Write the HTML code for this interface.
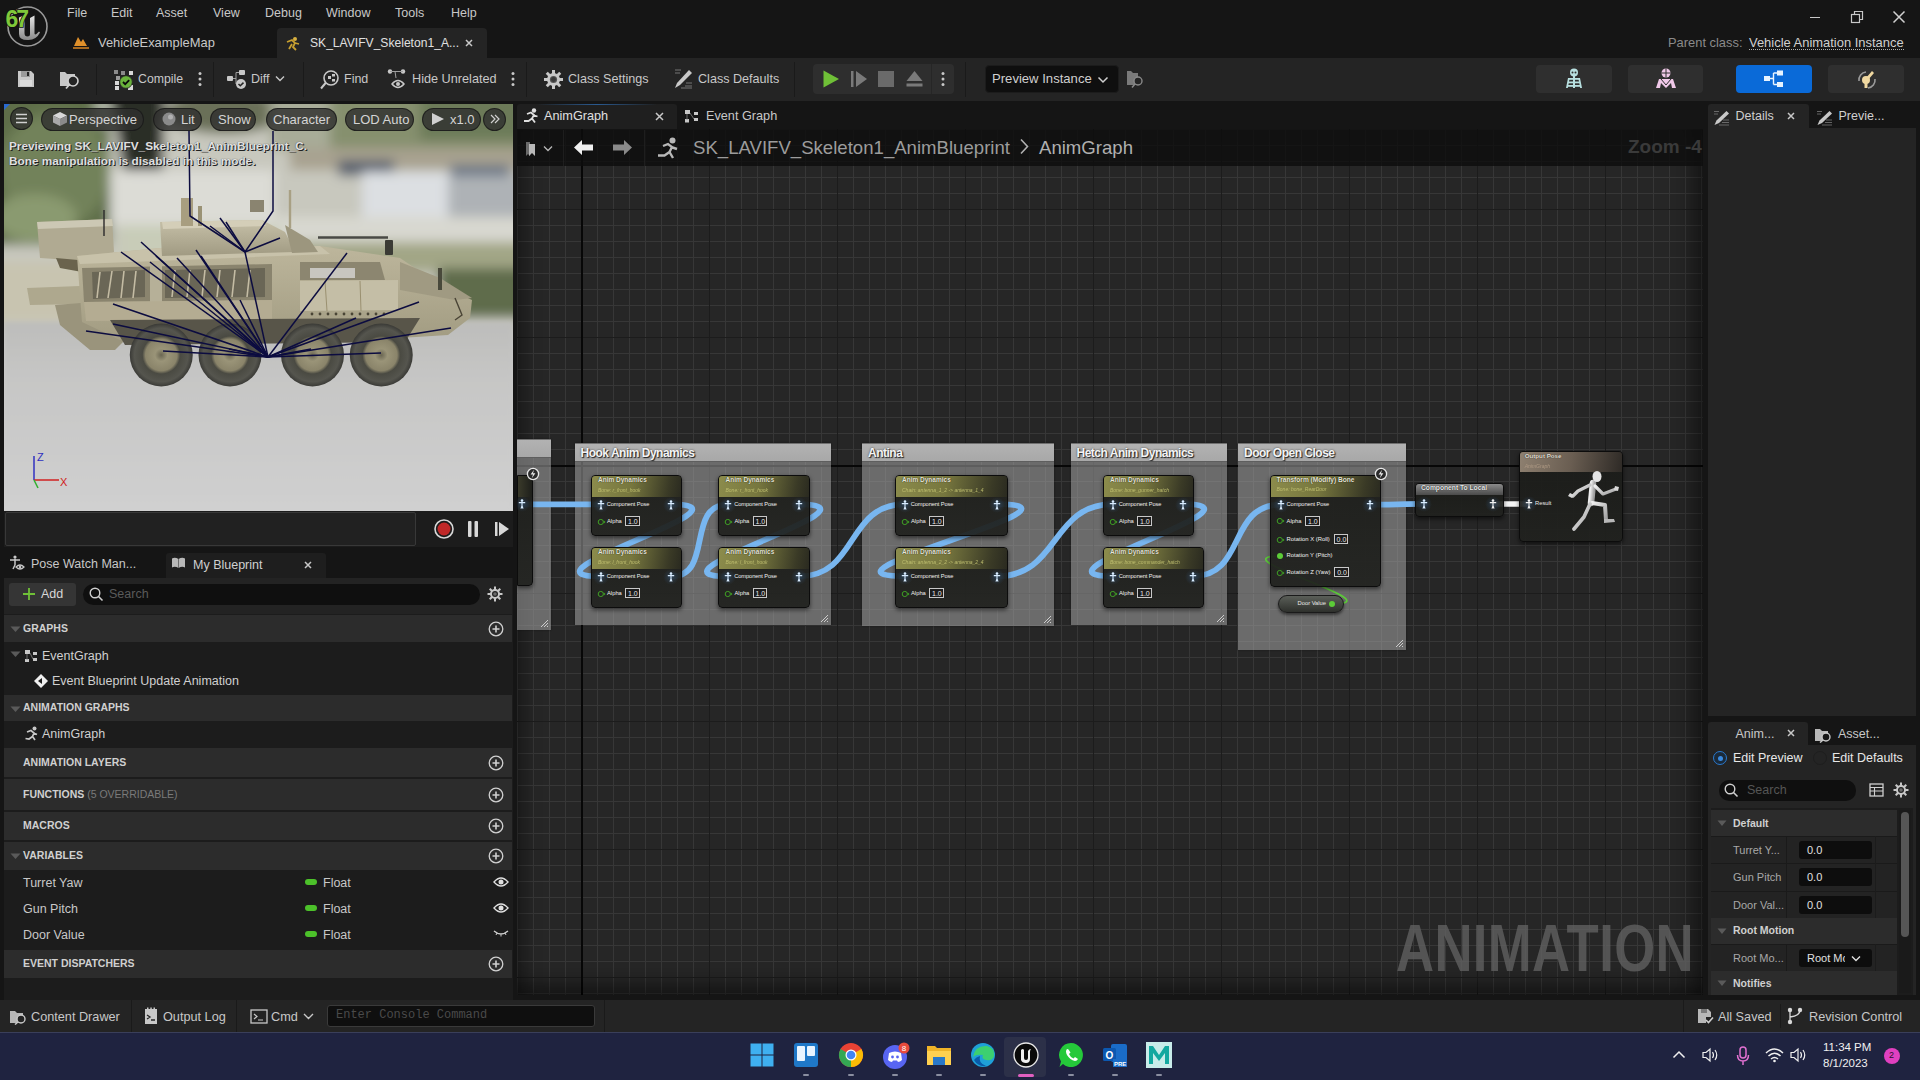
<!DOCTYPE html>
<html><head><meta charset="utf-8">
<style>
*{box-sizing:border-box;margin:0;padding:0}
html,body{width:1920px;height:1080px;overflow:hidden;background:#151515;font-family:"Liberation Sans",sans-serif;color:#c0c0c0}
.a{position:absolute}
.t{position:absolute;white-space:nowrap;line-height:1}
#title{left:0;top:0;width:1920px;height:58px;background:#151515}
#toolbar{left:0;top:58px;width:1920px;height:43px;background:#242424}
#viewport{left:4px;top:104px;width:509px;height:407px;background:#c8c8c8;overflow:hidden}
#timeline{left:4px;top:511px;width:509px;height:36px;background:#1c1c1c}
#ltabs{left:4px;top:547px;width:509px;height:31px;background:#151515}
#mybp{left:4px;top:578px;width:509px;height:422px;background:#1c1c1c}
#gtabs{left:517px;top:104px;width:1186px;height:25px;background:#151515}
#canvas{left:517px;top:129px;width:1186px;height:866px;background-color:#262626;
 background-image:linear-gradient(to right,#1c1c1c 1px,transparent 1px),linear-gradient(to bottom,#1c1c1c 1px,transparent 1px),linear-gradient(to right,#373737 1px,transparent 1px),linear-gradient(to bottom,#373737 1px,transparent 1px);
 background-size:128px 128px,128px 128px,16px 16px,16px 16px;
 background-position:64px 80px,64px 80px,0 0,0 0;overflow:hidden}
#details{left:1708px;top:104px;width:207px;height:612px;background:#242424}
#animprev{left:1708px;top:720px;width:207px;height:275px;background:#242424}
#status{left:0;top:1000px;width:1920px;height:32px;background:#242424}
#taskbar{left:0;top:1032px;width:1920px;height:48px;background:#1f2340}
.pill{background:rgba(48,48,46,0.82);border:1.5px solid rgba(20,20,20,0.7);border-radius:12px}
.vptxt{font-weight:700;color:#e0e0e0;text-shadow:1px 1px 0 #202020,0 0 1px #303030}
.cmt{position:absolute;background:rgba(166,166,166,0.54);box-shadow:0 0 2px rgba(0,0,0,0.4)}
.cmth{position:absolute;left:0;top:0;width:100%;background:linear-gradient(to bottom,#b2b2b2,#a8a8a8);border-top:1.5px solid #707070;border-bottom:1px solid #5e5e5e}
.cmtt{font-size:12px;font-weight:700;color:#f4f4f4;letter-spacing:-0.5px;text-shadow:1px 1px 1px #202020,0 0 2px #404040}
.node{position:absolute;background:linear-gradient(to bottom,rgba(26,27,24,0.93),rgba(32,33,30,0.93));border:1px solid #0c0c0c;border-radius:4px;box-shadow:0 2px 4px rgba(0,0,0,0.55);overflow:hidden}
.nh{position:absolute;left:0;top:0;width:100%;background:linear-gradient(100deg,#8c8c4c 0%,#76763e 45%,#3a3a26 85%,#2a2a20 100%)}
.vbox{position:absolute;border:1px solid #c8c8c8;background:#1c1c1c}
.vbox span{position:absolute;left:2px;top:0.5px;font-size:7px;line-height:1;color:#e8e8e8;white-space:nowrap}
</style></head><body>
<div id="title" class="a">
 <svg class="a" style="left:4px;top:4px" width="46" height="46" viewBox="0 0 46 46">
  <defs><linearGradient id="ug" x1="0" y1="0" x2="0" y2="1"><stop offset="0" stop-color="#e8e8e8"/><stop offset="1" stop-color="#8a8a8a"/></linearGradient></defs>
  <circle cx="23.5" cy="22.5" r="19.5" fill="#151515" stroke="#9a9a9a" stroke-width="1.6"/>
  <path d="M15 13.5 L20.5 11 L20.5 29 Q20.5 32.5 23.5 32.5 Q26 32.5 26 30 L26 14 L30.5 11.5 L30.5 29.5 Q31 32 35 27.5 L36 28.5 Q32 36.5 23.5 36 Q15 36 15 30 Z" fill="url(#ug)"/>
  <text x="1.5" y="23" font-family="Liberation Sans" font-weight="700" font-size="23" fill="#80c83a" stroke="#101010" stroke-width="1.6" paint-order="stroke" letter-spacing="-2">67</text>
 </svg>
 <div class="t" style="left:67px;top:6.5px;font-size:12.5px;color:#c8c8c8">File</div>
 <div class="t" style="left:111px;top:6.5px;font-size:12.5px;color:#c8c8c8">Edit</div>
 <div class="t" style="left:156px;top:6.5px;font-size:12.5px;color:#c8c8c8">Asset</div>
 <div class="t" style="left:213px;top:6.5px;font-size:12.5px;color:#c8c8c8">View</div>
 <div class="t" style="left:265px;top:6.5px;font-size:12.5px;color:#c8c8c8">Debug</div>
 <div class="t" style="left:326px;top:6.5px;font-size:12.5px;color:#c8c8c8">Window</div>
 <div class="t" style="left:395px;top:6.5px;font-size:12.5px;color:#c8c8c8">Tools</div>
 <div class="t" style="left:451px;top:6.5px;font-size:12.5px;color:#c8c8c8">Help</div>
 <svg class="a" style="left:72px;top:34px" width="18" height="16" viewBox="0 0 18 16"><path d="M2 12 L6 3 L9 8 L11 5 L15 12 Z" fill="#e0902a"/><rect x="1" y="13" width="16" height="2" fill="#a86a20"/></svg>
 <div class="t" style="left:98px;top:37px;font-size:12.9px;color:#c8c8c8">VehicleExampleMap</div>
 <div class="a" style="left:277px;top:28px;width:210px;height:30px;background:#242424;border-radius:4px 4px 0 0"></div>
 <svg class="a" style="left:284px;top:35px" width="18" height="16" viewBox="0 0 18 16"><circle cx="11" cy="4" r="2" fill="#d8b040"/><path d="M3 7 l5-2 l3 3 l-2 4 l3 3 M8 9 l-3 5 M11 8 l4 1" stroke="#c8a030" stroke-width="1.8" fill="none"/></svg>
 <div class="t" style="left:310px;top:37px;font-size:12.1px;color:#e0e0e0">SK_LAVIFV_Skeleton1_A...</div>
 <svg class="a" style="left:465px;top:39px" width="8" height="8" viewBox="0 0 8 8"><path d="M1 1 L7 7 M7 1 L1 7" stroke="#c8c8c8" stroke-width="1.5"/></svg>
 <div class="t" style="left:1668px;top:37px;font-size:12.9px;color:#8a8a8a">Parent class:</div>
 <div class="t" style="left:1749px;top:37px;font-size:12.95px;color:#d0d0d0">Vehicle Animation Instance</div>
 <div class="a" style="left:1749px;top:49px;width:155px;height:0;border-top:1px dotted #b0b0b0"></div>
 <div class="a" style="left:1810px;top:17px;width:10px;height:1px;background:#c8c8c8"></div>
 <svg class="a" style="left:1850px;top:10px" width="14" height="14" viewBox="0 0 14 14"><rect x="1.5" y="4.5" width="8" height="8" fill="none" stroke="#c8c8c8" stroke-width="1.2"/><path d="M4.5 4.5 V1.5 H12.5 V9.5 H9.5" fill="none" stroke="#c8c8c8" stroke-width="1.2"/></svg>
 <svg class="a" style="left:1892px;top:10px" width="14" height="14" viewBox="0 0 14 14"><path d="M1.5 1.5 L12.5 12.5 M12.5 1.5 L1.5 12.5" stroke="#d0d0d0" stroke-width="1.5"/></svg>
</div>
<div id="toolbar" class="a">
 <svg class="a" style="left:16px;top:11px" width="20" height="20" viewBox="0 0 20 20"><path d="M2 2 H15 L18 5 V18 H2 Z" fill="#c8c8c8"/><rect x="5" y="2" width="9" height="6" fill="#9a9a9a"/><rect x="11" y="3" width="2" height="4" fill="#242424"/><rect x="4" y="11" width="12" height="6" fill="#dcdcdc"/></svg>
 <svg class="a" style="left:59px;top:11px" width="22" height="22" viewBox="0 0 22 22"><path d="M1 3 h5 l2 2 h8 v12 h-15 z" fill="#c8c8c8"/><circle cx="14" cy="12" r="5" fill="#242424" stroke="#d0d0d0" stroke-width="1.6"/><path d="M10.5 15.5 L7 19.5" stroke="#d0d0d0" stroke-width="1.8"/></svg>
 <div class="a" style="left:96px;top:6px;width:1px;height:31px;background:#1a1a1a"></div>
 <svg class="a" style="left:113px;top:11px" width="22" height="22" viewBox="0 0 22 22"><rect x="1" y="1" width="4" height="4" fill="#8a8a8a"/><rect x="8" y="2" width="4" height="4" fill="#8a8a8a"/><rect x="16" y="2" width="4" height="4" fill="#d8d8d8"/><rect x="3" y="7" width="4" height="4" fill="#9a9a9a"/><rect x="2" y="12" width="4" height="4" fill="#d8d8d8"/><rect x="2" y="17" width="4" height="4" fill="#d8d8d8"/><rect x="15" y="16" width="5" height="5" fill="#d8d8d8"/><circle cx="13" cy="13" r="6.3" fill="#6ab43c" stroke="#242424" stroke-width="0.8"/><path d="M10 13 l2.2 2.2 l4-4" stroke="#0a0a0a" stroke-width="1.8" fill="none"/></svg>
 <div class="t" style="left:138px;top:15px;font-size:12.3px;color:#c8c8c8">Compile</div>
 <svg class="a" style="left:198px;top:13px" width="4" height="16" viewBox="0 0 4 16"><circle cx="2" cy="2.5" r="1.5" fill="#c8c8c8"/><circle cx="2" cy="8" r="1.5" fill="#c8c8c8"/><circle cx="2" cy="13.5" r="1.5" fill="#c8c8c8"/></svg>
 <div class="a" style="left:213px;top:4px;width:1px;height:35px;background:#1a1a1a"></div>
 <svg class="a" style="left:226px;top:11px" width="22" height="22" viewBox="0 0 22 22"><rect x="1" y="7" width="6" height="5" rx="1" fill="#c8c8c8"/><rect x="13" y="1" width="6" height="5" rx="1" fill="#c8c8c8"/><path d="M7 9.5 H10 M10 3.5 V15 M10 3.5 H13" stroke="#a0a0a0" stroke-width="1"/><circle cx="15" cy="15" r="5" fill="#c8c8c8"/><path d="M12.5 15 l1.8 1.8 l3.2-3.2" stroke="#242424" stroke-width="1.5" fill="none"/></svg>
 <div class="t" style="left:251px;top:15px;font-size:12.5px;color:#c8c8c8">Diff</div>
 <svg class="a" style="left:275px;top:17px" width="10" height="7" viewBox="0 0 10 7"><path d="M1 1.5 L5 5.5 L9 1.5" stroke="#c8c8c8" stroke-width="1.4" fill="none"/></svg>
 <div class="a" style="left:303px;top:4px;width:1px;height:35px;background:#1a1a1a"></div>
 <svg class="a" style="left:319px;top:11px" width="22" height="22" viewBox="0 0 22 22"><circle cx="12" cy="9" r="7" fill="none" stroke="#c8c8c8" stroke-width="1.6"/><path d="M7 13.5 L2 19.5" stroke="#c8c8c8" stroke-width="2"/><rect x="9" y="7" width="3" height="3" fill="#c8c8c8"/><rect x="13" y="5" width="3" height="2.5" fill="#c8c8c8"/><rect x="13" y="10" width="3" height="2.5" fill="#c8c8c8"/></svg>
 <div class="t" style="left:344px;top:15px;font-size:12.5px;color:#c8c8c8">Find</div>
 <svg class="a" style="left:387px;top:10px" width="22" height="22" viewBox="0 0 22 22"><circle cx="3" cy="3.5" r="2.2" fill="#c8c8c8"/><circle cx="16" cy="3.5" r="2.2" fill="#c8c8c8"/><path d="M3 3.5 H16 M8 3.5 L9 10" stroke="#a0a0a0" stroke-width="1"/><path d="M5 16 q6-7 12 0 q-6 7-12 0 z" fill="none" stroke="#c8c8c8" stroke-width="1.5"/><circle cx="11" cy="16" r="2" fill="#c8c8c8"/></svg>
 <div class="t" style="left:412px;top:15px;font-size:12.7px;color:#c8c8c8">Hide Unrelated</div>
 <svg class="a" style="left:511px;top:13px" width="4" height="16" viewBox="0 0 4 16"><circle cx="2" cy="2.5" r="1.5" fill="#c8c8c8"/><circle cx="2" cy="8" r="1.5" fill="#c8c8c8"/><circle cx="2" cy="13.5" r="1.5" fill="#c8c8c8"/></svg>
 <div class="a" style="left:526px;top:4px;width:1px;height:35px;background:#1a1a1a"></div>
 <svg class="a" style="left:543px;top:11px" width="21" height="21" viewBox="0 0 21 21"><g fill="#c8c8c8"><circle cx="10.5" cy="10.5" r="6.5"/><rect x="9" y="1" width="3" height="19"/><rect x="1" y="9" width="19" height="3"/><rect x="9" y="1" width="3" height="19" transform="rotate(45 10.5 10.5)"/><rect x="9" y="1" width="3" height="19" transform="rotate(-45 10.5 10.5)"/></g><circle cx="10.5" cy="10.5" r="3.6" fill="#555"/><circle cx="10.5" cy="10.5" r="2.4" fill="#3a3a3a"/></svg>
 <div class="t" style="left:568px;top:15px;font-size:12.6px;color:#c8c8c8">Class Settings</div>
 <svg class="a" style="left:673px;top:10px" width="22" height="22" viewBox="0 0 22 22"><path d="M2 2 H8 M2 5 H7 M13 15 H19 M12 18 H19 M8 20 H19" stroke="#8a8a8a" stroke-width="0.8"/><path d="M16 2 L19 5 L7 17 L2 20 L4 15 Z" fill="#c8c8c8"/></svg>
 <div class="t" style="left:698px;top:15px;font-size:12.6px;color:#c8c8c8">Class Defaults</div>
 <div class="a" style="left:794px;top:4px;width:1px;height:35px;background:#1a1a1a"></div>
 <div class="a" style="left:813px;top:6px;width:141px;height:30px;background:#2e2e2e;border-radius:4px"></div>
 <div class="a" style="left:931px;top:6px;width:1px;height:30px;background:#262626"></div>
 <svg class="a" style="left:821px;top:11px" width="20" height="20" viewBox="0 0 20 20"><path d="M2.5 1.5 L18 10 L2.5 18.5 Z" fill="#6fc037"/></svg>
 <svg class="a" style="left:850px;top:12px" width="18" height="18" viewBox="0 0 18 18"><rect x="1" y="1" width="2.5" height="16" fill="#7a7a7a"/><path d="M6 1 L17 9 L6 17 Z" fill="#7a7a7a"/></svg>
 <svg class="a" style="left:877px;top:12px" width="18" height="18" viewBox="0 0 18 18"><rect x="1" y="1" width="16" height="16" fill="#6a6a6a"/></svg>
 <svg class="a" style="left:905px;top:11px" width="19" height="19" viewBox="0 0 19 19"><path d="M9.5 2 L17.5 12 H1.5 Z" fill="#7a7a7a"/><rect x="1.5" y="14.5" width="16" height="3" fill="#7a7a7a"/></svg>
 <svg class="a" style="left:941px;top:13px" width="4" height="16" viewBox="0 0 4 16"><circle cx="2" cy="2.5" r="1.5" fill="#c8c8c8"/><circle cx="2" cy="8" r="1.5" fill="#c8c8c8"/><circle cx="2" cy="13.5" r="1.5" fill="#c8c8c8"/></svg>
 <div class="a" style="left:965px;top:4px;width:1px;height:35px;background:#1a1a1a"></div>
 <div class="a" style="left:985px;top:7px;width:134px;height:28px;background:#0f0f0f;border-radius:4px;border:1px solid #1c1c1c"></div>
 <div class="t" style="left:992px;top:14px;font-size:13.1px;color:#d0d0d0">Preview Instance</div>
 <svg class="a" style="left:1097px;top:18px" width="12" height="8" viewBox="0 0 12 8"><path d="M1.5 1.5 L6 6 L10.5 1.5" stroke="#d0d0d0" stroke-width="1.5" fill="none"/></svg>
 <svg class="a" style="left:1125px;top:10px" width="20" height="22" viewBox="0 0 20 22"><path d="M2 3 h4 l2 2 h5 v12 h-11 z" fill="#7a7a7a"/><circle cx="13" cy="13" r="4" fill="#242424" stroke="#8a8a8a" stroke-width="1.4"/><path d="M10 16 L7 19.5" stroke="#8a8a8a" stroke-width="1.5"/></svg>
 <div class="a" style="left:1536px;top:7px;width:76px;height:28px;background:#2f2f2f;border-radius:4px"></div>
 <div class="a" style="left:1628px;top:7px;width:75px;height:28px;background:#2f2f2f;border-radius:4px"></div>
 <div class="a" style="left:1736px;top:7px;width:76px;height:28px;background:#0a6ad8;border-radius:4px"></div>
 <div class="a" style="left:1828px;top:7px;width:76px;height:28px;background:#2f2f2f;border-radius:4px"></div>
 <svg class="a" style="left:1564px;top:10px" width="20" height="22" viewBox="0 0 20 22"><g fill="#b8e0e0"><circle cx="10" cy="4.5" r="4"/><rect x="9" y="8" width="2" height="12"/><rect x="4" y="10" width="12" height="1.8"/><rect x="4" y="13.5" width="12" height="1.8"/><rect x="4" y="17" width="12" height="1.8"/><path d="M4 10 L2 20 h1.8 L5.5 11 z M16 10 L18 20 h-1.8 L14.5 11 z"/></g><circle cx="8.5" cy="4.5" r="1" fill="#2f2f2f"/><circle cx="11.5" cy="4.5" r="1" fill="#2f2f2f"/></svg>
 <svg class="a" style="left:1655px;top:10px" width="22" height="22" viewBox="0 0 22 22"><g fill="#f0c8e8"><circle cx="11" cy="5" r="4.5"/><path d="M4 11 h14 l3 9 h-4 l-1-5 l-5 5 l-5-5 l-1 5 h-4 z"/></g><path d="M11 0.5 V9.5 M6.5 5 H15.5" stroke="#2f2f2f" stroke-width="1"/><path d="M6 11 L11 17 L16 11" stroke="#2f2f2f" stroke-width="1" fill="none"/></svg>
 <svg class="a" style="left:1763px;top:11px" width="22" height="20" viewBox="0 0 22 20"><rect x="1" y="7" width="6" height="5" fill="#e8f4ff"/><rect x="14" y="1.5" width="6" height="5" fill="#e8f4ff"/><rect x="14" y="13" width="6" height="5" fill="#e8f4ff"/><path d="M7 9.5 H10.5 M10.5 4 V15.5 M10.5 4 H14 M10.5 15.5 H14" stroke="#e8f4ff" stroke-width="1.4" fill="none"/></svg>
 <svg class="a" style="left:1856px;top:10px" width="22" height="22" viewBox="0 0 22 22"><path d="M3 13 A8 8 0 0 1 10 4" stroke="#9a9a9a" stroke-width="1.6" fill="none"/><path d="M12 20 A8 8 0 0 0 19 11" stroke="#9a9a9a" stroke-width="1.6" fill="none"/><path d="M16 3 L18 5 L12 12 L10 10 Z" fill="#f0d8a0"/><circle cx="10" cy="12" r="4" fill="#f0d8a0"/><rect x="8.5" y="15" width="3" height="5" fill="#f0d8a0"/></svg>
</div>
<div id="viewport" class="a">
 <svg class="a" style="left:0;top:0" width="509" height="407" viewBox="4 104 509 407">
  <defs>
   <filter id="bl" x="-20%" y="-20%" width="140%" height="140%"><feGaussianBlur stdDeviation="6"/></filter>
   <filter id="bl2" x="-20%" y="-20%" width="140%" height="140%"><feGaussianBlur stdDeviation="2.5"/></filter>
   <filter id="bl1"><feGaussianBlur stdDeviation="0.6"/></filter>
   <linearGradient id="floor" x1="0" y1="0" x2="0" y2="1"><stop offset="0" stop-color="#bdbdbb"/><stop offset="0.3" stop-color="#c6c6c5"/><stop offset="1" stop-color="#d0d0d0"/></linearGradient>
   <linearGradient id="hull" x1="0" y1="0" x2="0" y2="1"><stop offset="0" stop-color="#bdb69c"/><stop offset="1" stop-color="#a29c82"/></linearGradient>
   <linearGradient id="turret" x1="0" y1="0" x2="0" y2="1"><stop offset="0" stop-color="#c6c0a8"/><stop offset="1" stop-color="#a09a82"/></linearGradient>
   <radialGradient id="wheel" cx="0.5" cy="0.5" r="0.5"><stop offset="0" stop-color="#6a6652"/><stop offset="0.2" stop-color="#9a9478"/><stop offset="0.5" stop-color="#8a846a"/><stop offset="0.6" stop-color="#4a4a42"/><stop offset="0.85" stop-color="#55554e"/><stop offset="1" stop-color="#3a3a36"/></radialGradient>
  </defs>
  <rect x="4" y="104" width="509" height="407" fill="url(#floor)"/>
  <g filter="url(#bl)">
   <rect x="-20" y="80" width="560" height="250" fill="#c8c8be"/>
   <rect x="-20" y="80" width="130" height="165" fill="#5e6e4a"/>
   <ellipse cx="55" cy="170" rx="55" ry="58" fill="#72825a"/>
   <ellipse cx="35" cy="218" rx="42" ry="24" fill="#8a9a70"/>
   <rect x="95" y="80" width="40" height="45" fill="#aab0a0"/>
   <path d="M108 80 L165 80 L162 200 L128 196 Z" fill="#2a2e28"/>
   <ellipse cx="225" cy="112" rx="60" ry="22" fill="#6a7058"/>
   <rect x="110" y="170" width="165" height="55" fill="#dcdcd6"/>
   <rect x="-10" y="262" width="100" height="60" fill="#c8c4b0"/>
   <rect x="300" y="80" width="225" height="70" fill="#86906e"/>
   <rect x="420" y="80" width="105" height="60" fill="#6c7a58"/>
   <rect x="270" y="80" width="60" height="70" fill="#a8ac98"/>
   <rect x="290" y="148" width="235" height="22" fill="#a8a290"/>
   <rect x="338" y="160" width="56" height="16" fill="#5a6270"/>
   <rect x="450" y="165" width="60" height="14" fill="#6a7686"/>
   <rect x="362" y="172" width="88" height="45" fill="#dcdfe2"/>
   <rect x="448" y="176" width="75" height="48" fill="#aeb2b6"/>
   <rect x="275" y="217" width="250" height="26" fill="#d8d8d0"/>
   <rect x="280" y="242" width="245" height="30" fill="#a2a686"/>
   <rect x="438" y="268" width="90" height="50" fill="#5e6c4c"/>
   <rect x="255" y="300" width="185" height="22" fill="#c4c6b6"/>
   <rect x="120" y="225" width="160" height="40" fill="#c8ccb8"/>
  </g>
  <rect x="4" y="322" width="509" height="189" fill="url(#floor)" filter="url(#bl2)"/>
  <g filter="url(#bl1)">
   <path d="M37 222 L112 219 L114 252 L100 262 L40 258 Z" fill="#b0aa92"/>
   <path d="M37 222 L112 219 L113 226 L38 229 Z" fill="#ccc8b4"/>
   <path d="M56 258 L100 262 L82 272 L60 268 Z" fill="#6a644e"/>
   <path d="M27 288 L80 286 L82 304 L30 305 Z" fill="#aea88e"/>
   <path d="M55 305 L120 300 L125 340 L115 350 L90 350 L60 325 Z" fill="#9a947c"/>
   <path d="M77 256 L160 248 L320 246 L400 258 L440 285 L472 300 L470 318 L448 335 L400 338 L120 340 L82 322 Z" fill="url(#hull)"/>
   <path d="M77 256 L160 248 L320 246 L330 254 L80 264 Z" fill="#c8c2aa"/>
   <path d="M82 268 L272 264 L272 300 L84 302 Z" fill="#8a846e"/>
   <path d="M92 272 L145 270 L145 297 L93 299 Z" fill="#6a6656"/>
   <path d="M165 270 L265 268 L265 297 L165 298 Z" fill="#6a6656"/>
   <g stroke="#c4bca4" stroke-width="1.6"><line x1="100" y1="272" x2="97" y2="298"/><line x1="112" y1="271" x2="108" y2="298"/><line x1="124" y1="271" x2="121" y2="298"/><line x1="136" y1="271" x2="133" y2="298"/><line x1="175" y1="270" x2="172" y2="297"/><line x1="190" y1="270" x2="187" y2="297"/><line x1="205" y1="270" x2="202" y2="297"/><line x1="220" y1="270" x2="217" y2="297"/><line x1="235" y1="270" x2="232" y2="297"/><line x1="250" y1="270" x2="247" y2="297"/></g>
   <rect x="150" y="266" width="12" height="54" fill="#b6b098"/>
   <path d="M84 302 L272 300 L272 320 L86 321 Z" fill="#b4ac92"/>
   <path d="M300 281 L398 280 L398 310 L300 311 Z" fill="#c4bea6"/>
   <path d="M325 281 L327 311 M360 281 L361 311" stroke="#9a9070" stroke-width="1"/>
   <g fill="#4a4436"><circle cx="312" cy="314" r="1.4"/><circle cx="320" cy="314" r="1.4"/><circle cx="328" cy="314" r="1.4"/><circle cx="336" cy="314" r="1.4"/><circle cx="344" cy="314" r="1.4"/><circle cx="352" cy="314" r="1.4"/><circle cx="360" cy="314" r="1.4"/><circle cx="368" cy="314" r="1.4"/><circle cx="376" cy="314" r="1.4"/><circle cx="384" cy="314" r="1.4"/></g>
   <path d="M300 262 L380 262 L385 280 L300 280 Z" fill="#8c8670"/>
   <path d="M310 268 L355 268 L355 278 L310 278 Z" fill="#c8c6c0"/>
   <path d="M400 262 L440 278 L472 298 L455 300 L400 290 Z" fill="#a09a82"/>
   <path d="M110 320 L420 318 L405 342 L125 345 Z" fill="#58544a"/>
   <path d="M160 222 L262 220 L285 232 L295 252 L162 256 Z" fill="url(#turret)"/>
   <path d="M162 222 L262 220 L266 226 L163 229 Z" fill="#d4ceb8"/>
   <path d="M285 225 L310 240 L318 252 L292 253 Z" fill="#9c967e"/>
   <rect x="181" y="198" width="12" height="28" fill="#a89e80"/>
   <rect x="198" y="206" width="4" height="20" fill="#9a9274"/>
   <rect x="250" y="200" width="14" height="12" fill="#8a8470"/>
   <line x1="318" y1="237.5" x2="388" y2="237.5" stroke="#4a4a44" stroke-width="2.6"/>
   <rect x="385" y="240" width="8" height="15" rx="1" fill="#3a3a34"/>
   <line x1="104" y1="210" x2="104" y2="236" stroke="#2a2a2a" stroke-width="1.4"/>
   <line x1="290" y1="190" x2="290" y2="228" stroke="#a8a084" stroke-width="2.4"/>
   <path d="M455 298 L462 315 L455 320" stroke="#4a4436" stroke-width="1.4" fill="none"/><rect x="438" y="268" width="4" height="22" fill="#4a4a3a"/>
  </g>
  <circle cx="161.25" cy="355" r="31.5" fill="url(#wheel)"/>
  <circle cx="230" cy="355" r="31.5" fill="url(#wheel)"/>
  <circle cx="312.5" cy="355" r="31.5" fill="url(#wheel)"/>
  <circle cx="381.25" cy="355" r="31.5" fill="url(#wheel)"/>
  <g stroke="#0c0c40" stroke-width="1.5"><line x1="268" y1="357" x2="121" y2="252"/><line x1="268" y1="357" x2="141" y2="242"/><line x1="268" y1="357" x2="156" y2="256"/><line x1="268" y1="357" x2="177" y2="258"/><line x1="268" y1="357" x2="201" y2="256"/><line x1="268" y1="357" x2="113" y2="304"/><line x1="268" y1="357" x2="113" y2="324"/><line x1="268" y1="357" x2="86" y2="331"/><line x1="268" y1="357" x2="163" y2="351"/><line x1="268" y1="357" x2="229" y2="349"/><line x1="268" y1="357" x2="347" y2="253"/><line x1="268" y1="357" x2="419" y2="302"/><line x1="268" y1="357" x2="356" y2="318"/><line x1="268" y1="357" x2="451" y2="328"/><line x1="268" y1="357" x2="381" y2="353"/><line x1="268" y1="357" x2="311" y2="349"/><line x1="268" y1="357" x2="196" y2="250"/><line x1="268" y1="357" x2="150" y2="262"/><line x1="268" y1="357" x2="240" y2="300"/><polyline points="189,131 190,216 245,252" fill="none"/><polyline points="273,131 273,211 245,252" fill="none"/><line x1="245" y1="252" x2="220" y2="218"/><line x1="245" y1="252" x2="226" y2="222"/><line x1="245" y1="252" x2="280" y2="238"/><line x1="245" y1="252" x2="210" y2="226"/><line x1="245" y1="252" x2="268" y2="357"/></g>
  <line x1="34" y1="480" x2="34" y2="456" stroke="#3030c0" stroke-width="1.5"/>
  <line x1="34" y1="480" x2="59" y2="480" stroke="#d02020" stroke-width="1.5"/>
  <line x1="34" y1="480" x2="38" y2="488" stroke="#30b030" stroke-width="1.5"/>
  <text x="37" y="461" font-family="Liberation Sans" font-size="11" fill="#3030c0">Z</text>
  <text x="60" y="486" font-family="Liberation Sans" font-size="11" fill="#d02020">X</text>
 </svg>
 <div class="a" style="left:0;top:0;width:6px;height:6px;background:#2a6ad0;clip-path:polygon(0 0,100% 0,0 100%)"></div>
 <div class="a pill" style="left:6px;top:3px;width:23px;height:23px;border-radius:50%"></div>
 <svg class="a" style="left:11px;top:9px" width="13" height="11" viewBox="0 0 13 11"><path d="M1 1.5 H12 M1 5.5 H12 M1 9.5 H12" stroke="#d0d0d0" stroke-width="1.3"/></svg>
 <div class="a pill" style="left:37px;top:3.5px;width:103px;height:23px"></div>
 <svg class="a" style="left:48px;top:7px" width="16" height="16" viewBox="0 0 16 16"><path d="M8 1 L15 4.5 L8 8 L1 4.5 Z" fill="#d8d8d8"/><path d="M1 4.5 L8 8 V15 L1 11.5 Z" fill="#a8a8a8"/><path d="M15 4.5 L8 8 V15 L15 11.5 Z" fill="#8a8a8a"/></svg>
 <div class="t" style="left:65px;top:9px;font-size:13px;color:#d4d4d4">Perspective</div>
 <div class="a pill" style="left:149px;top:3.5px;width:49px;height:23px"></div>
 <svg class="a" style="left:157px;top:7px" width="16" height="16" viewBox="0 0 16 16"><circle cx="8" cy="8" r="6.5" fill="#8a8a8a"/><circle cx="9.5" cy="6" r="2.5" fill="#b0b0b0"/></svg>
 <div class="t" style="left:177px;top:9px;font-size:13px;color:#d4d4d4">Lit</div>
 <div class="a pill" style="left:206px;top:3.5px;width:46px;height:23px"></div>
 <div class="t" style="left:214px;top:9px;font-size:13px;color:#d4d4d4">Show</div>
 <div class="a pill" style="left:262px;top:3.5px;width:71px;height:23px"></div>
 <div class="t" style="left:269px;top:9px;font-size:13px;color:#d4d4d4">Character</div>
 <div class="a pill" style="left:341px;top:3.5px;width:69px;height:23px"></div>
 <div class="t" style="left:349px;top:9px;font-size:13px;color:#d4d4d4">LOD Auto</div>
 <div class="a pill" style="left:418px;top:3.5px;width:59px;height:23px"></div>
 <svg class="a" style="left:427px;top:8px" width="14" height="14" viewBox="0 0 14 14"><path d="M1 1 L13 7 L1 13 Z" fill="#d0d0d0"/></svg>
 <div class="t" style="left:446px;top:9px;font-size:13px;color:#d4d4d4">x1.0</div>
 <div class="a pill" style="left:479px;top:3.5px;width:23px;height:23px;border-radius:50%"></div>
 <svg class="a" style="left:486px;top:10px" width="10" height="10" viewBox="0 0 10 10"><path d="M1 1 L5 5 L1 9 M5 1 L9 5 L5 9" stroke="#d0d0d0" stroke-width="1.2" fill="none"/></svg>
 <div class="t vptxt" style="left:5px;top:37px;font-size:11.8px">Previewing SK_LAVIFV_Skeleton1_AnimBlueprint_C.</div>
 <div class="t vptxt" style="left:5px;top:52px;font-size:11.8px">Bone manipulation is disabled in this mode.</div>
</div>
<div id="timeline" class="a">
 <div class="a" style="left:1px;top:1px;width:411px;height:34px;background:#212121;border:1.5px solid #383838;border-radius:2px"></div>
 <svg class="a" style="left:429px;top:7px" width="22" height="22" viewBox="0 0 22 22"><circle cx="11" cy="11" r="9" fill="none" stroke="#d8d8d8" stroke-width="1.6"/><circle cx="11" cy="11" r="6.5" fill="#c02828"/></svg>
 <svg class="a" style="left:463px;top:9px" width="12" height="18" viewBox="0 0 12 18"><rect x="1" y="1" width="3.5" height="16" rx="1" fill="#d8d8d8"/><rect x="7.5" y="1" width="3.5" height="16" rx="1" fill="#d8d8d8"/></svg>
 <svg class="a" style="left:490px;top:10px" width="16" height="16" viewBox="0 0 16 16"><rect x="1" y="1" width="2.5" height="14" fill="#d8d8d8"/><path d="M5 1 L15 8 L5 15 Z" fill="#d8d8d8"/></svg>
</div>
<div id="ltabs" class="a">
 <svg class="a" style="left:5px;top:8px" width="16" height="16" viewBox="0 0 16 16"><circle cx="6" cy="2" r="1.6" fill="#c8c8c8"/><path d="M1 5 H11 M6 3.5 V10 M6 10 L4 14" stroke="#c8c8c8" stroke-width="1.5" fill="none"/><path d="M7 12 q4-4 8 0 q-4 4-8 0z" fill="none" stroke="#c8c8c8" stroke-width="1.2"/><circle cx="11" cy="12" r="1.2" fill="#c8c8c8"/></svg>
 <div class="t" style="left:27px;top:11px;font-size:12.5px;color:#c8c8c8">Pose Watch Man...</div>
 <div class="a" style="left:162px;top:6px;width:160px;height:25px;background:#1e1e1e;border-radius:3px 3px 0 0"></div>
 <svg class="a" style="left:167px;top:10px" width="15" height="12" viewBox="0 0 15 12"><path d="M1 1.5 Q4 0 7.5 2 Q11 0 14 1.5 V10.5 Q11 9 7.5 11 Q4 9 1 10.5 Z" fill="#b8b8b8"/><path d="M7.5 2 V11" stroke="#555" stroke-width="0.8"/></svg>
 <div class="t" style="left:189px;top:12px;font-size:12.5px;color:#d0d0d0">My Blueprint</div>
 <svg class="a" style="left:300px;top:14px" width="8" height="8" viewBox="0 0 8 8"><path d="M1 1 L7 7 M7 1 L1 7" stroke="#c8c8c8" stroke-width="1.5"/></svg>
</div>
<div id="mybp" class="a">
 <div class="a" style="left:0;top:0;width:508px;height:36px;background:#232323"></div>
 <div class="a" style="left:5px;top:5px;width:67px;height:23px;background:#353535;border-radius:3px"></div>
 <svg class="a" style="left:18px;top:9px" width="14" height="14" viewBox="0 0 14 14"><path d="M7 1 V13 M1 7 H13" stroke="#6fc037" stroke-width="1.8"/></svg>
 <div class="t" style="left:37px;top:10px;font-size:12.5px;color:#d8d8d8">Add</div>
 <div class="a" style="left:79px;top:6px;width:397px;height:21px;background:#0f0f0f;border-radius:11px"></div>
 <svg class="a" style="left:85px;top:9px" width="15" height="15" viewBox="0 0 15 15"><circle cx="6" cy="6" r="4.8" fill="none" stroke="#d0d0d0" stroke-width="1.4"/><path d="M9.5 9.5 L13.5 13.5" stroke="#d0d0d0" stroke-width="1.6"/></svg>
 <div class="t" style="left:105px;top:10px;font-size:12.5px;color:#5a5a5a">Search</div>
 <svg class="a" style="left:483px;top:8px" width="16" height="16" viewBox="0 0 16 16"><g fill="#c8c8c8"><circle cx="8" cy="8" r="5"/><rect x="7" y="0.5" width="2" height="15"/><rect x="0.5" y="7" width="15" height="2"/><rect x="7" y="0.5" width="2" height="15" transform="rotate(45 8 8)"/><rect x="7" y="0.5" width="2" height="15" transform="rotate(-45 8 8)"/></g><circle cx="8" cy="8" r="3" fill="#232323"/><circle cx="8" cy="8" r="1.8" fill="#6a6a6a"/></svg>
<div class="a" style="left:0;top:37px;width:508px;height:27px;background:#2c2c2c"></div><svg class="a" style="left:6px;top:48px" width="11" height="7" viewBox="0 0 11 7"><path d="M0.5 0.5 H10.5 L5.5 6 Z" fill="#5a5a5a"/></svg><div class="t" style="left:19px;top:44.5px;font-size:10.5px;font-weight:700;color:#d0d0d0">GRAPHS</div><svg class="a" style="left:484px;top:42.5px" width="16" height="16" viewBox="0 0 16 16"><circle cx="8" cy="8" r="6.8" fill="none" stroke="#d0d0d0" stroke-width="1.3"/><path d="M8 4.5 V11.5 M4.5 8 H11.5" stroke="#d0d0d0" stroke-width="1.6"/></svg><svg class="a" style="left:6px;top:73px" width="11" height="7" viewBox="0 0 11 7"><path d="M0.5 0.5 H10.5 L5.5 6 Z" fill="#5a5a5a"/></svg><svg class="a" style="left:20px;top:71px" width="15" height="15" viewBox="0 0 15 15"><rect x="1" y="1" width="5" height="4" fill="#c8c8c8"/><rect x="9" y="3" width="4" height="3" fill="#c8c8c8"/><rect x="1" y="10" width="4" height="3" fill="#c8c8c8"/><rect x="9" y="9" width="4" height="3" fill="#c8c8c8"/><path d="M3 5 V11 M6 4 L9 10" stroke="#888" stroke-width="0.8"/></svg><div class="t" style="left:38px;top:72px;font-size:12.5px;color:#d0d0d0">EventGraph</div><svg class="a" style="left:29px;top:95px" width="16" height="16" viewBox="0 0 16 16"><path d="M8 1 L15 8 L8 15 L1 8 Z" fill="#f0f0f0"/><path d="M5 8 L9 5 V11 Z" fill="#1c1c1c"/></svg><div class="t" style="left:48px;top:97px;font-size:12.5px;color:#d0d0d0">Event Blueprint Update Animation</div><div class="a" style="left:0;top:117px;width:508px;height:26px;background:#2c2c2c"></div><svg class="a" style="left:6px;top:128px" width="11" height="7" viewBox="0 0 11 7"><path d="M0.5 0.5 H10.5 L5.5 6 Z" fill="#5a5a5a"/></svg><div class="t" style="left:19px;top:124.0px;font-size:10.5px;font-weight:700;color:#d0d0d0">ANIMATION GRAPHS</div><svg class="a" style="left:19px;top:148px" width="17" height="17" viewBox="0 0 17 17"><circle cx="11.5" cy="2.5" r="2" fill="#c8c8c8"/><path d="M4 6 L8 4.5 L11 7 L9.5 10.5 L12 14 M9.5 10.5 L6 13 L2.5 12.5 M10.5 7 L14 8.5" stroke="#c8c8c8" stroke-width="1.7" fill="none"/></svg><div class="t" style="left:38px;top:150px;font-size:12.5px;color:#d0d0d0">AnimGraph</div><div class="a" style="left:0;top:170px;width:508px;height:29px;background:#2c2c2c"></div><div class="t" style="left:19px;top:178.5px;font-size:10.5px;font-weight:700;color:#d0d0d0">ANIMATION LAYERS</div><svg class="a" style="left:484px;top:176.5px" width="16" height="16" viewBox="0 0 16 16"><circle cx="8" cy="8" r="6.8" fill="none" stroke="#d0d0d0" stroke-width="1.3"/><path d="M8 4.5 V11.5 M4.5 8 H11.5" stroke="#d0d0d0" stroke-width="1.6"/></svg><div class="a" style="left:0;top:201px;width:508px;height:31px;background:#2c2c2c"></div><div class="t" style="left:19px;top:210.5px;font-size:10.5px;font-weight:700;color:#d0d0d0">FUNCTIONS <span style="font-weight:400;color:#7a7a7a;font-size:10.5px">(5 OVERRIDABLE)</span></div><svg class="a" style="left:484px;top:208.5px" width="16" height="16" viewBox="0 0 16 16"><circle cx="8" cy="8" r="6.8" fill="none" stroke="#d0d0d0" stroke-width="1.3"/><path d="M8 4.5 V11.5 M4.5 8 H11.5" stroke="#d0d0d0" stroke-width="1.6"/></svg><div class="a" style="left:0;top:234px;width:508px;height:28px;background:#2c2c2c"></div><div class="t" style="left:19px;top:242.0px;font-size:10.5px;font-weight:700;color:#d0d0d0">MACROS</div><svg class="a" style="left:484px;top:240.0px" width="16" height="16" viewBox="0 0 16 16"><circle cx="8" cy="8" r="6.8" fill="none" stroke="#d0d0d0" stroke-width="1.3"/><path d="M8 4.5 V11.5 M4.5 8 H11.5" stroke="#d0d0d0" stroke-width="1.6"/></svg><div class="a" style="left:0;top:264px;width:508px;height:28px;background:#2c2c2c"></div><svg class="a" style="left:6px;top:275px" width="11" height="7" viewBox="0 0 11 7"><path d="M0.5 0.5 H10.5 L5.5 6 Z" fill="#5a5a5a"/></svg><div class="t" style="left:19px;top:272.0px;font-size:10.5px;font-weight:700;color:#d0d0d0">VARIABLES</div><svg class="a" style="left:484px;top:270.0px" width="16" height="16" viewBox="0 0 16 16"><circle cx="8" cy="8" r="6.8" fill="none" stroke="#d0d0d0" stroke-width="1.3"/><path d="M8 4.5 V11.5 M4.5 8 H11.5" stroke="#d0d0d0" stroke-width="1.6"/></svg><div class="t" style="left:19px;top:299px;font-size:12.5px;color:#c8c8c8">Turret Yaw</div><div class="a" style="left:301px;top:301px;width:12px;height:6px;border-radius:3px;background:#4cc12a"></div><div class="t" style="left:319px;top:299px;font-size:12.5px;color:#c8c8c8">Float</div><svg class="a" style="left:489px;top:297px" width="16" height="14" viewBox="0 0 16 14"><path d="M1 7 Q8 -1 15 7 Q8 15 1 7 Z" fill="none" stroke="#e0e0e0" stroke-width="1.4"/><circle cx="8" cy="7" r="2.5" fill="#e0e0e0"/></svg><div class="t" style="left:19px;top:325px;font-size:12.5px;color:#c8c8c8">Gun Pitch</div><div class="a" style="left:301px;top:327px;width:12px;height:6px;border-radius:3px;background:#4cc12a"></div><div class="t" style="left:319px;top:325px;font-size:12.5px;color:#c8c8c8">Float</div><svg class="a" style="left:489px;top:323px" width="16" height="14" viewBox="0 0 16 14"><path d="M1 7 Q8 -1 15 7 Q8 15 1 7 Z" fill="none" stroke="#e0e0e0" stroke-width="1.4"/><circle cx="8" cy="7" r="2.5" fill="#e0e0e0"/></svg><div class="t" style="left:19px;top:351px;font-size:12.5px;color:#c8c8c8">Door Value</div><div class="a" style="left:301px;top:353px;width:12px;height:6px;border-radius:3px;background:#4cc12a"></div><div class="t" style="left:319px;top:351px;font-size:12.5px;color:#c8c8c8">Float</div><svg class="a" style="left:489px;top:350px" width="16" height="10" viewBox="0 0 16 10"><path d="M1 3 Q8 9 15 3" fill="none" stroke="#d0d0d0" stroke-width="1.3"/><path d="M4 5 L3 7 M8 6.5 V8.5 M12 5 L13 7" stroke="#d0d0d0" stroke-width="1"/></svg><div class="a" style="left:0;top:372px;width:508px;height:28px;background:#2c2c2c"></div><div class="t" style="left:19px;top:380.0px;font-size:10.5px;font-weight:700;color:#d0d0d0">EVENT DISPATCHERS</div><svg class="a" style="left:484px;top:378.0px" width="16" height="16" viewBox="0 0 16 16"><circle cx="8" cy="8" r="6.8" fill="none" stroke="#d0d0d0" stroke-width="1.3"/><path d="M8 4.5 V11.5 M4.5 8 H11.5" stroke="#d0d0d0" stroke-width="1.6"/></svg></div>
<div id="gtabs" class="a">
 <div class="a" style="left:0;top:0;width:160px;height:25px;background:#1f1f1f;border-radius:3px 3px 0 0"></div>
 <div class="a" style="left:20px;top:0;width:120px;height:1px;background:linear-gradient(to right,transparent,#2a5a90,transparent)"></div>
 <svg class="a" style="left:5px;top:4px" width="18" height="17" viewBox="0 0 18 17"><circle cx="12" cy="2.5" r="2.2" fill="#e0e0e0"/><path d="M5 6 L9 4.5 L12 7 L10 10.5 L13 14.5 M10 10.5 L6.5 13 L2 13 M11 7 L15.5 8.5" stroke="#e0e0e0" stroke-width="1.8" fill="none"/></svg>
 <div class="t" style="left:27px;top:6px;font-size:12.7px;color:#e0e0e0">AnimGraph</div>
 <svg class="a" style="left:138px;top:8px" width="9" height="9" viewBox="0 0 9 9"><path d="M1 1 L8 8 M8 1 L1 8" stroke="#c8c8c8" stroke-width="1.5"/></svg>
 <svg class="a" style="left:167px;top:5px" width="16" height="15" viewBox="0 0 16 15"><rect x="1" y="1" width="5" height="4" fill="#c8c8c8"/><rect x="10" y="3" width="4" height="3" fill="#c8c8c8"/><rect x="1" y="10" width="4" height="3.5" fill="#c8c8c8"/><rect x="10" y="9" width="4" height="3" fill="#c8c8c8"/><path d="M3 5 V11 M6 4 L10 10" stroke="#888" stroke-width="0.8"/></svg>
 <div class="t" style="left:189px;top:6px;font-size:12.7px;color:#c8c8c8">Event Graph</div>
</div>
<div id="canvas" class="a">
<div class="a" style="left:64px;top:0;width:1.5px;height:866px;background:#070707"></div><div class="a" style="left:0;top:336px;width:1186px;height:1.5px;background:#070707"></div>
<div class="a" style="left:0;top:0;width:1186px;height:866px;box-shadow:inset -22px 0 22px -12px rgba(0,0,0,0.45),inset 0 -22px 22px -12px rgba(0,0,0,0.45),inset 18px 0 18px -12px rgba(0,0,0,0.35)"></div>
<!--NODES-->
<div class="a cmt" style="left:0px;top:310px;width:34px;height:191px"><div class="cmth" style="height:19px"></div><svg class="a" style="right:2px;bottom:2px" width="9" height="9" viewBox="0 0 9 9"><path d="M8 1 L1 8 M8 4 L4 8 M8 7 L7 8" stroke="#d8d8d8" stroke-width="0.9"/></svg></div>
<div class="a cmt" style="left:57.5px;top:314px;width:256.5px;height:181.5px"><div class="cmth" style="height:19px"></div><div class="t cmtt" style="left:6px;top:3.5px">Hook Anim Dynamics</div><svg class="a" style="right:2px;bottom:2px" width="9" height="9" viewBox="0 0 9 9"><path d="M8 1 L1 8 M8 4 L4 8 M8 7 L7 8" stroke="#d8d8d8" stroke-width="0.9"/></svg></div>
<div class="a cmt" style="left:345px;top:314px;width:192px;height:183px"><div class="cmth" style="height:19px"></div><div class="t cmtt" style="left:6px;top:3.5px">Antina</div><svg class="a" style="right:2px;bottom:2px" width="9" height="9" viewBox="0 0 9 9"><path d="M8 1 L1 8 M8 4 L4 8 M8 7 L7 8" stroke="#d8d8d8" stroke-width="0.9"/></svg></div>
<div class="a cmt" style="left:553.5px;top:314px;width:156.5px;height:181.5px"><div class="cmth" style="height:19px"></div><div class="t cmtt" style="left:6px;top:3.5px">Hetch Anim Dynamics</div><svg class="a" style="right:2px;bottom:2px" width="9" height="9" viewBox="0 0 9 9"><path d="M8 1 L1 8 M8 4 L4 8 M8 7 L7 8" stroke="#d8d8d8" stroke-width="0.9"/></svg></div>
<div class="a cmt" style="left:721px;top:314px;width:168px;height:207px"><div class="cmth" style="height:19px"></div><div class="t cmtt" style="left:6px;top:3.5px">Door Open Close</div><svg class="a" style="right:2px;bottom:2px" width="9" height="9" viewBox="0 0 9 9"><path d="M8 1 L1 8 M8 4 L4 8 M8 7 L7 8" stroke="#d8d8d8" stroke-width="0.9"/></svg></div>
<svg class="a" style="left:0;top:0" width="1186" height="866" viewBox="0 0 1186 866"><path d="M5.0 375.4 C31.3 375.4 57.7 375.4 84.0 375.4" stroke="#78b6f0" stroke-width="5.8" fill="none" stroke-linecap="round"/><path d="M154.0 375.4 C249.1 375.4 -11.1 447.4 84.0 447.4" stroke="#78b6f0" stroke-width="5.8" fill="none" stroke-linecap="round"/><path d="M154.0 447.4 C197.1 447.4 168.2 375.4 211.3 375.4" stroke="#78b6f0" stroke-width="5.8" fill="none" stroke-linecap="round"/><path d="M282.0 375.4 C377.6 375.4 115.7 447.4 211.3 447.4" stroke="#78b6f0" stroke-width="5.8" fill="none" stroke-linecap="round"/><path d="M282.0 447.4 C341.4 447.4 328.6 375.2 388.0 375.2" stroke="#78b6f0" stroke-width="5.8" fill="none" stroke-linecap="round"/><path d="M480.0 375.2 C591.9 375.2 276.1 447.2 388.0 447.2" stroke="#78b6f0" stroke-width="5.8" fill="none" stroke-linecap="round"/><path d="M480.0 447.2 C542.7 447.2 533.3 375.2 596.0 375.2" stroke="#78b6f0" stroke-width="5.8" fill="none" stroke-linecap="round"/><path d="M666.0 375.2 C761.1 375.2 500.9 447.2 596.0 447.2" stroke="#78b6f0" stroke-width="5.8" fill="none" stroke-linecap="round"/><path d="M676.0 447.2 C729.0 447.2 710.6 375.7 763.6 375.7" stroke="#78b6f0" stroke-width="5.8" fill="none" stroke-linecap="round"/><path d="M853.0 375.7 C871.4 375.7 888.9 374.9 907.3 374.9" stroke="#78b6f0" stroke-width="5.8" fill="none" stroke-linecap="round"/><path d="M976.0 375.0 C987.8 375.0 999.7 375.0 1011.5 375.0" stroke="#f4f4f4" stroke-width="5.5" fill="none" stroke-linecap="round"/><path d="M815.0 475.0 C882.0 475.0 696.6 427.0 763.6 427.0" stroke="#5ccc38" stroke-width="1.6" fill="none" stroke-linecap="round"/></svg>
<div class="a node" style="left:73.5px;top:345.5px;width:91.5px;height:61.5px"><div class="nh" style="height:21px"></div></div><div class="t" style="left:81.0px;top:348.4px;font-size:6.5px;color:#e8e8d8;font-weight:700;text-shadow:0 0 1px #000">Anim Dynamics</div><div class="t" style="left:81.0px;top:358.8px;font-size:5px;color:#c0c070;font-weight:400;font-style:italic;opacity:0.95">Bone: r_front_hook</div><div class="a" style="left:75.79999999999995px;top:367.5px;width:16px;height:16px;border-radius:50%;background:radial-gradient(rgba(70,130,200,0.28),transparent 70%)"></div><svg class="a" style="left:79.79999999999995px;top:370.5px" width="8" height="10" viewBox="0 0 8 10"><circle cx="4" cy="1.6" r="1.3" fill="#d8ecff"/><path d="M0.8 3.6 H7.2 M4 3.4 V6.8 M4 6.8 L3 9.6 M4 6.8 L5 9.6" stroke="#d8ecff" stroke-width="1.1" fill="none"/></svg><div class="a" style="left:146px;top:367.5px;width:16px;height:16px;border-radius:50%;background:radial-gradient(rgba(70,130,200,0.28),transparent 70%)"></div><svg class="a" style="left:150px;top:370.5px" width="8" height="10" viewBox="0 0 8 10"><circle cx="4" cy="1.6" r="1.3" fill="#d8ecff"/><path d="M0.8 3.6 H7.2 M4 3.4 V6.8 M4 6.8 L3 9.6 M4 6.8 L5 9.6" stroke="#d8ecff" stroke-width="1.1" fill="none"/></svg><div class="t" style="left:89.79999999999995px;top:372.9px;font-size:5.7px;color:#f0f0f0;font-weight:400;letter-spacing:-0.1px">Component Pose</div><svg class="a" style="left:79.5px;top:388.70000000000005px" width="9" height="8" viewBox="0 0 9 8"><circle cx="3.8" cy="4" r="2.6" fill="none" stroke="#3fa024" stroke-width="1"/><path d="M6.8 2.5 L8.5 4 L6.8 5.5" fill="#3fa024"/></svg><div class="t" style="left:90.0px;top:390.0px;font-size:5.8px;color:#f0f0f0;font-weight:400;">Alpha</div><div class="a vbox" style="left:108.0px;top:387.29999999999995px;width:14.5px;height:10px"><span>1.0</span></div>
<div class="a node" style="left:73.5px;top:417.5px;width:91.5px;height:61.5px"><div class="nh" style="height:21px"></div></div><div class="t" style="left:81.0px;top:420.4px;font-size:6.5px;color:#e8e8d8;font-weight:700;text-shadow:0 0 1px #000">Anim Dynamics</div><div class="t" style="left:81.0px;top:430.8px;font-size:5px;color:#c0c070;font-weight:400;font-style:italic;opacity:0.95">Bone: l_front_hook</div><div class="a" style="left:75.79999999999995px;top:439.5px;width:16px;height:16px;border-radius:50%;background:radial-gradient(rgba(70,130,200,0.28),transparent 70%)"></div><svg class="a" style="left:79.79999999999995px;top:442.5px" width="8" height="10" viewBox="0 0 8 10"><circle cx="4" cy="1.6" r="1.3" fill="#d8ecff"/><path d="M0.8 3.6 H7.2 M4 3.4 V6.8 M4 6.8 L3 9.6 M4 6.8 L5 9.6" stroke="#d8ecff" stroke-width="1.1" fill="none"/></svg><div class="a" style="left:146px;top:439.5px;width:16px;height:16px;border-radius:50%;background:radial-gradient(rgba(70,130,200,0.28),transparent 70%)"></div><svg class="a" style="left:150px;top:442.5px" width="8" height="10" viewBox="0 0 8 10"><circle cx="4" cy="1.6" r="1.3" fill="#d8ecff"/><path d="M0.8 3.6 H7.2 M4 3.4 V6.8 M4 6.8 L3 9.6 M4 6.8 L5 9.6" stroke="#d8ecff" stroke-width="1.1" fill="none"/></svg><div class="t" style="left:89.79999999999995px;top:444.9px;font-size:5.7px;color:#f0f0f0;font-weight:400;letter-spacing:-0.1px">Component Pose</div><svg class="a" style="left:79.5px;top:460.70000000000005px" width="9" height="8" viewBox="0 0 9 8"><circle cx="3.8" cy="4" r="2.6" fill="none" stroke="#3fa024" stroke-width="1"/><path d="M6.8 2.5 L8.5 4 L6.8 5.5" fill="#3fa024"/></svg><div class="t" style="left:90.0px;top:462.0px;font-size:5.8px;color:#f0f0f0;font-weight:400;">Alpha</div><div class="a vbox" style="left:108.0px;top:459.29999999999995px;width:14.5px;height:10px"><span>1.0</span></div>
<div class="a node" style="left:201px;top:345.5px;width:92px;height:61.5px"><div class="nh" style="height:21px"></div></div><div class="t" style="left:208.5px;top:348.4px;font-size:6.5px;color:#e8e8d8;font-weight:700;text-shadow:0 0 1px #000">Anim Dynamics</div><div class="t" style="left:208.5px;top:358.8px;font-size:5px;color:#c0c070;font-weight:400;font-style:italic;opacity:0.95">Bone: r_front_hook</div><div class="a" style="left:203.29999999999995px;top:367.5px;width:16px;height:16px;border-radius:50%;background:radial-gradient(rgba(70,130,200,0.28),transparent 70%)"></div><svg class="a" style="left:207.29999999999995px;top:370.5px" width="8" height="10" viewBox="0 0 8 10"><circle cx="4" cy="1.6" r="1.3" fill="#d8ecff"/><path d="M0.8 3.6 H7.2 M4 3.4 V6.8 M4 6.8 L3 9.6 M4 6.8 L5 9.6" stroke="#d8ecff" stroke-width="1.1" fill="none"/></svg><div class="a" style="left:274px;top:367.5px;width:16px;height:16px;border-radius:50%;background:radial-gradient(rgba(70,130,200,0.28),transparent 70%)"></div><svg class="a" style="left:278px;top:370.5px" width="8" height="10" viewBox="0 0 8 10"><circle cx="4" cy="1.6" r="1.3" fill="#d8ecff"/><path d="M0.8 3.6 H7.2 M4 3.4 V6.8 M4 6.8 L3 9.6 M4 6.8 L5 9.6" stroke="#d8ecff" stroke-width="1.1" fill="none"/></svg><div class="t" style="left:217.29999999999995px;top:372.9px;font-size:5.7px;color:#f0f0f0;font-weight:400;letter-spacing:-0.1px">Component Pose</div><svg class="a" style="left:207px;top:388.70000000000005px" width="9" height="8" viewBox="0 0 9 8"><circle cx="3.8" cy="4" r="2.6" fill="none" stroke="#3fa024" stroke-width="1"/><path d="M6.8 2.5 L8.5 4 L6.8 5.5" fill="#3fa024"/></svg><div class="t" style="left:217.5px;top:390.0px;font-size:5.8px;color:#f0f0f0;font-weight:400;">Alpha</div><div class="a vbox" style="left:235.5px;top:387.29999999999995px;width:14.5px;height:10px"><span>1.0</span></div>
<div class="a node" style="left:201px;top:417.5px;width:92px;height:61.5px"><div class="nh" style="height:21px"></div></div><div class="t" style="left:208.5px;top:420.4px;font-size:6.5px;color:#e8e8d8;font-weight:700;text-shadow:0 0 1px #000">Anim Dynamics</div><div class="t" style="left:208.5px;top:430.8px;font-size:5px;color:#c0c070;font-weight:400;font-style:italic;opacity:0.95">Bone: l_front_hook</div><div class="a" style="left:203.29999999999995px;top:439.5px;width:16px;height:16px;border-radius:50%;background:radial-gradient(rgba(70,130,200,0.28),transparent 70%)"></div><svg class="a" style="left:207.29999999999995px;top:442.5px" width="8" height="10" viewBox="0 0 8 10"><circle cx="4" cy="1.6" r="1.3" fill="#d8ecff"/><path d="M0.8 3.6 H7.2 M4 3.4 V6.8 M4 6.8 L3 9.6 M4 6.8 L5 9.6" stroke="#d8ecff" stroke-width="1.1" fill="none"/></svg><div class="a" style="left:274px;top:439.5px;width:16px;height:16px;border-radius:50%;background:radial-gradient(rgba(70,130,200,0.28),transparent 70%)"></div><svg class="a" style="left:278px;top:442.5px" width="8" height="10" viewBox="0 0 8 10"><circle cx="4" cy="1.6" r="1.3" fill="#d8ecff"/><path d="M0.8 3.6 H7.2 M4 3.4 V6.8 M4 6.8 L3 9.6 M4 6.8 L5 9.6" stroke="#d8ecff" stroke-width="1.1" fill="none"/></svg><div class="t" style="left:217.29999999999995px;top:444.9px;font-size:5.7px;color:#f0f0f0;font-weight:400;letter-spacing:-0.1px">Component Pose</div><svg class="a" style="left:207px;top:460.70000000000005px" width="9" height="8" viewBox="0 0 9 8"><circle cx="3.8" cy="4" r="2.6" fill="none" stroke="#3fa024" stroke-width="1"/><path d="M6.8 2.5 L8.5 4 L6.8 5.5" fill="#3fa024"/></svg><div class="t" style="left:217.5px;top:462.0px;font-size:5.8px;color:#f0f0f0;font-weight:400;">Alpha</div><div class="a vbox" style="left:235.5px;top:459.29999999999995px;width:14.5px;height:10px"><span>1.0</span></div>
<div class="a node" style="left:377.5px;top:345.5px;width:113.5px;height:61.0px"><div class="nh" style="height:21px"></div></div><div class="t" style="left:385.0px;top:348.4px;font-size:6.5px;color:#e8e8d8;font-weight:700;text-shadow:0 0 1px #000">Anim Dynamics</div><div class="t" style="left:385.0px;top:358.8px;font-size:5px;color:#c0c070;font-weight:400;font-style:italic;opacity:0.95">Chain: antenna_1_2 -> antenna_1_4</div><div class="a" style="left:379.79999999999995px;top:367.5px;width:16px;height:16px;border-radius:50%;background:radial-gradient(rgba(70,130,200,0.28),transparent 70%)"></div><svg class="a" style="left:383.79999999999995px;top:370.5px" width="8" height="10" viewBox="0 0 8 10"><circle cx="4" cy="1.6" r="1.3" fill="#d8ecff"/><path d="M0.8 3.6 H7.2 M4 3.4 V6.8 M4 6.8 L3 9.6 M4 6.8 L5 9.6" stroke="#d8ecff" stroke-width="1.1" fill="none"/></svg><div class="a" style="left:472px;top:367.5px;width:16px;height:16px;border-radius:50%;background:radial-gradient(rgba(70,130,200,0.28),transparent 70%)"></div><svg class="a" style="left:476px;top:370.5px" width="8" height="10" viewBox="0 0 8 10"><circle cx="4" cy="1.6" r="1.3" fill="#d8ecff"/><path d="M0.8 3.6 H7.2 M4 3.4 V6.8 M4 6.8 L3 9.6 M4 6.8 L5 9.6" stroke="#d8ecff" stroke-width="1.1" fill="none"/></svg><div class="t" style="left:393.79999999999995px;top:372.9px;font-size:5.7px;color:#f0f0f0;font-weight:400;letter-spacing:-0.1px">Component Pose</div><svg class="a" style="left:383.5px;top:388.70000000000005px" width="9" height="8" viewBox="0 0 9 8"><circle cx="3.8" cy="4" r="2.6" fill="none" stroke="#3fa024" stroke-width="1"/><path d="M6.8 2.5 L8.5 4 L6.8 5.5" fill="#3fa024"/></svg><div class="t" style="left:394.0px;top:390.0px;font-size:5.8px;color:#f0f0f0;font-weight:400;">Alpha</div><div class="a vbox" style="left:412.0px;top:387.29999999999995px;width:14.5px;height:10px"><span>1.0</span></div>
<div class="a node" style="left:377.5px;top:417.5px;width:113.5px;height:61.5px"><div class="nh" style="height:21px"></div></div><div class="t" style="left:385.0px;top:420.4px;font-size:6.5px;color:#e8e8d8;font-weight:700;text-shadow:0 0 1px #000">Anim Dynamics</div><div class="t" style="left:385.0px;top:430.8px;font-size:5px;color:#c0c070;font-weight:400;font-style:italic;opacity:0.95">Chain: antenna_2_2 -> antenna_2_4</div><div class="a" style="left:379.79999999999995px;top:439.5px;width:16px;height:16px;border-radius:50%;background:radial-gradient(rgba(70,130,200,0.28),transparent 70%)"></div><svg class="a" style="left:383.79999999999995px;top:442.5px" width="8" height="10" viewBox="0 0 8 10"><circle cx="4" cy="1.6" r="1.3" fill="#d8ecff"/><path d="M0.8 3.6 H7.2 M4 3.4 V6.8 M4 6.8 L3 9.6 M4 6.8 L5 9.6" stroke="#d8ecff" stroke-width="1.1" fill="none"/></svg><div class="a" style="left:472px;top:439.5px;width:16px;height:16px;border-radius:50%;background:radial-gradient(rgba(70,130,200,0.28),transparent 70%)"></div><svg class="a" style="left:476px;top:442.5px" width="8" height="10" viewBox="0 0 8 10"><circle cx="4" cy="1.6" r="1.3" fill="#d8ecff"/><path d="M0.8 3.6 H7.2 M4 3.4 V6.8 M4 6.8 L3 9.6 M4 6.8 L5 9.6" stroke="#d8ecff" stroke-width="1.1" fill="none"/></svg><div class="t" style="left:393.79999999999995px;top:444.9px;font-size:5.7px;color:#f0f0f0;font-weight:400;letter-spacing:-0.1px">Component Pose</div><svg class="a" style="left:383.5px;top:460.70000000000005px" width="9" height="8" viewBox="0 0 9 8"><circle cx="3.8" cy="4" r="2.6" fill="none" stroke="#3fa024" stroke-width="1"/><path d="M6.8 2.5 L8.5 4 L6.8 5.5" fill="#3fa024"/></svg><div class="t" style="left:394.0px;top:462.0px;font-size:5.8px;color:#f0f0f0;font-weight:400;">Alpha</div><div class="a vbox" style="left:412.0px;top:459.29999999999995px;width:14.5px;height:10px"><span>1.0</span></div>
<div class="a node" style="left:585.5px;top:345.5px;width:91.5px;height:61.0px"><div class="nh" style="height:21px"></div></div><div class="t" style="left:593.0px;top:348.4px;font-size:6.5px;color:#e8e8d8;font-weight:700;text-shadow:0 0 1px #000">Anim Dynamics</div><div class="t" style="left:593.0px;top:358.8px;font-size:5px;color:#c0c070;font-weight:400;font-style:italic;opacity:0.95">Bone: bone_gunner_hatch</div><div class="a" style="left:587.8px;top:367.5px;width:16px;height:16px;border-radius:50%;background:radial-gradient(rgba(70,130,200,0.28),transparent 70%)"></div><svg class="a" style="left:591.8px;top:370.5px" width="8" height="10" viewBox="0 0 8 10"><circle cx="4" cy="1.6" r="1.3" fill="#d8ecff"/><path d="M0.8 3.6 H7.2 M4 3.4 V6.8 M4 6.8 L3 9.6 M4 6.8 L5 9.6" stroke="#d8ecff" stroke-width="1.1" fill="none"/></svg><div class="a" style="left:658px;top:367.5px;width:16px;height:16px;border-radius:50%;background:radial-gradient(rgba(70,130,200,0.28),transparent 70%)"></div><svg class="a" style="left:662px;top:370.5px" width="8" height="10" viewBox="0 0 8 10"><circle cx="4" cy="1.6" r="1.3" fill="#d8ecff"/><path d="M0.8 3.6 H7.2 M4 3.4 V6.8 M4 6.8 L3 9.6 M4 6.8 L5 9.6" stroke="#d8ecff" stroke-width="1.1" fill="none"/></svg><div class="t" style="left:601.8px;top:372.9px;font-size:5.7px;color:#f0f0f0;font-weight:400;letter-spacing:-0.1px">Component Pose</div><svg class="a" style="left:591.5px;top:388.70000000000005px" width="9" height="8" viewBox="0 0 9 8"><circle cx="3.8" cy="4" r="2.6" fill="none" stroke="#3fa024" stroke-width="1"/><path d="M6.8 2.5 L8.5 4 L6.8 5.5" fill="#3fa024"/></svg><div class="t" style="left:602.0px;top:390.0px;font-size:5.8px;color:#f0f0f0;font-weight:400;">Alpha</div><div class="a vbox" style="left:620.0px;top:387.29999999999995px;width:14.5px;height:10px"><span>1.0</span></div>
<div class="a node" style="left:585.5px;top:417.5px;width:101.5px;height:61.5px"><div class="nh" style="height:21px"></div></div><div class="t" style="left:593.0px;top:420.4px;font-size:6.5px;color:#e8e8d8;font-weight:700;text-shadow:0 0 1px #000">Anim Dynamics</div><div class="t" style="left:593.0px;top:430.8px;font-size:5px;color:#c0c070;font-weight:400;font-style:italic;opacity:0.95">Bone: bone_commander_hatch</div><div class="a" style="left:587.8px;top:439.5px;width:16px;height:16px;border-radius:50%;background:radial-gradient(rgba(70,130,200,0.28),transparent 70%)"></div><svg class="a" style="left:591.8px;top:442.5px" width="8" height="10" viewBox="0 0 8 10"><circle cx="4" cy="1.6" r="1.3" fill="#d8ecff"/><path d="M0.8 3.6 H7.2 M4 3.4 V6.8 M4 6.8 L3 9.6 M4 6.8 L5 9.6" stroke="#d8ecff" stroke-width="1.1" fill="none"/></svg><div class="a" style="left:668px;top:439.5px;width:16px;height:16px;border-radius:50%;background:radial-gradient(rgba(70,130,200,0.28),transparent 70%)"></div><svg class="a" style="left:672px;top:442.5px" width="8" height="10" viewBox="0 0 8 10"><circle cx="4" cy="1.6" r="1.3" fill="#d8ecff"/><path d="M0.8 3.6 H7.2 M4 3.4 V6.8 M4 6.8 L3 9.6 M4 6.8 L5 9.6" stroke="#d8ecff" stroke-width="1.1" fill="none"/></svg><div class="t" style="left:601.8px;top:444.9px;font-size:5.7px;color:#f0f0f0;font-weight:400;letter-spacing:-0.1px">Component Pose</div><svg class="a" style="left:591.5px;top:460.70000000000005px" width="9" height="8" viewBox="0 0 9 8"><circle cx="3.8" cy="4" r="2.6" fill="none" stroke="#3fa024" stroke-width="1"/><path d="M6.8 2.5 L8.5 4 L6.8 5.5" fill="#3fa024"/></svg><div class="t" style="left:602.0px;top:462.0px;font-size:5.8px;color:#f0f0f0;font-weight:400;">Alpha</div><div class="a vbox" style="left:620.0px;top:459.29999999999995px;width:14.5px;height:10px"><span>1.0</span></div>
<div class="a node" style="left:0px;top:346px;width:15.5px;height:111px;border-radius:0 4px 4px 0"><div class="nh" style="height:21px;background:linear-gradient(to right,#3a3a2a,#1e1f1b)"></div></div>
<div class="a" style="left:-3px;top:367.4px;width:16px;height:16px;border-radius:50%;background:radial-gradient(rgba(70,130,200,0.28),transparent 70%)"></div><svg class="a" style="left:1px;top:370.4px" width="8" height="10" viewBox="0 0 8 10"><circle cx="4" cy="1.6" r="1.3" fill="#d8ecff"/><path d="M0.8 3.6 H7.2 M4 3.4 V6.8 M4 6.8 L3 9.6 M4 6.8 L5 9.6" stroke="#d8ecff" stroke-width="1.1" fill="none"/></svg>
<svg class="a" style="left:8.799999999999955px;top:337.9px" width="14" height="14" viewBox="0 0 14 14"><circle cx="7" cy="7" r="5.6" fill="#2a2a2a" stroke="#e8e8e8" stroke-width="1.3"/><path d="M8 2.8 L4.6 7.6 H7 L5.8 11.2 L9.4 6.2 H7 Z" fill="#e8e8e8"/></svg>
<div class="a node" style="left:753px;top:346px;width:111px;height:112px"><div class="nh" style="height:21px"></div></div>
<div class="t" style="left:759.5px;top:348.0px;font-size:6.6px;color:#e8e8d8;font-weight:700;text-shadow:0 0 1px #000">Transform (Modify) Bone</div>
<div class="t" style="left:759.5px;top:358.4px;font-size:5px;color:#c0c070;font-weight:400;font-style:italic;opacity:0.95">Bone: bone_RearDoor</div>
<div class="a" style="left:755.5999999999999px;top:367.7px;width:16px;height:16px;border-radius:50%;background:radial-gradient(rgba(70,130,200,0.28),transparent 70%)"></div><svg class="a" style="left:759.5999999999999px;top:370.7px" width="8" height="10" viewBox="0 0 8 10"><circle cx="4" cy="1.6" r="1.3" fill="#d8ecff"/><path d="M0.8 3.6 H7.2 M4 3.4 V6.8 M4 6.8 L3 9.6 M4 6.8 L5 9.6" stroke="#d8ecff" stroke-width="1.1" fill="none"/></svg>
<div class="a" style="left:844.9000000000001px;top:367.7px;width:16px;height:16px;border-radius:50%;background:radial-gradient(rgba(70,130,200,0.28),transparent 70%)"></div><svg class="a" style="left:848.9000000000001px;top:370.7px" width="8" height="10" viewBox="0 0 8 10"><circle cx="4" cy="1.6" r="1.3" fill="#d8ecff"/><path d="M0.8 3.6 H7.2 M4 3.4 V6.8 M4 6.8 L3 9.6 M4 6.8 L5 9.6" stroke="#d8ecff" stroke-width="1.1" fill="none"/></svg>
<div class="t" style="left:769.5999999999999px;top:373.1px;font-size:5.7px;color:#f0f0f0;font-weight:400;letter-spacing:-0.1px">Component Pose</div>
<svg class="a" style="left:759px;top:388.4px" width="9" height="8" viewBox="0 0 9 8"><circle cx="3.8" cy="4" r="2.6" fill="none" stroke="#3fa024" stroke-width="1"/><path d="M6.8 2.5 L8.5 4 L6.8 5.5" fill="#3fa024"/></svg>
<div class="t" style="left:769.5999999999999px;top:389.7px;font-size:5.8px;color:#f0f0f0;font-weight:400;">Alpha</div>
<div class="a vbox" style="left:788px;top:387.20000000000005px;width:15px;height:10px"><span>1.0</span></div>
<svg class="a" style="left:759px;top:406.5px" width="9" height="8" viewBox="0 0 9 8"><circle cx="3.8" cy="4" r="2.6" fill="none" stroke="#3fa024" stroke-width="1"/><path d="M6.8 2.5 L8.5 4 L6.8 5.5" fill="#3fa024"/></svg>
<div class="t" style="left:769.5999999999999px;top:407.8px;font-size:5.9px;color:#f0f0f0;font-weight:400;">Rotation X (Roll)</div>
<div class="a vbox" style="left:816.5999999999999px;top:405.29999999999995px;width:14.400000000000091px;height:10px"><span>0.0</span></div>
<div class="a" style="left:760px;top:424px;width:6px;height:6px;border-radius:50%;background:#5ccc38"></div>
<div class="t" style="left:769.5999999999999px;top:424.3px;font-size:5.9px;color:#f0f0f0;font-weight:400;">Rotation Y (Pitch)</div>
<svg class="a" style="left:759px;top:439.6px" width="9" height="8" viewBox="0 0 9 8"><circle cx="3.8" cy="4" r="2.6" fill="none" stroke="#3fa024" stroke-width="1"/><path d="M6.8 2.5 L8.5 4 L6.8 5.5" fill="#3fa024"/></svg>
<div class="t" style="left:769.5999999999999px;top:440.9px;font-size:5.9px;color:#f0f0f0;font-weight:400;">Rotation Z (Yaw)</div>
<div class="a vbox" style="left:817.2px;top:438.4px;width:14.799999999999955px;height:10px"><span>0.0</span></div>
<svg class="a" style="left:857px;top:338.2px" width="14" height="14" viewBox="0 0 14 14"><circle cx="7" cy="7" r="5.6" fill="#2a2a2a" stroke="#e8e8e8" stroke-width="1.3"/><path d="M8 2.8 L4.6 7.6 H7 L5.8 11.2 L9.4 6.2 H7 Z" fill="#e8e8e8"/></svg>
<div class="a" style="left:761px;top:465.5px;width:66px;height:18px;border-radius:9px;background:linear-gradient(to bottom,#5a5e58,#2e302c);border:1px solid #1a1a1a;box-shadow:0 2px 3px rgba(0,0,0,0.5)"></div>
<div class="t" style="left:780.5px;top:471.8px;font-size:5.8px;color:#e8e8e8;font-weight:400;">Door Value</div>
<div class="a" style="left:811.5px;top:472px;width:6px;height:6px;border-radius:50%;background:#5ccc38"></div>
<div class="a node" style="left:898px;top:354px;width:88.5px;height:34px"><div class="nh" style="height:11px;background:linear-gradient(to bottom,#8a8a8a,#4a4a4a)"></div></div>
<div class="t" style="left:904px;top:355.8px;font-size:6.7px;color:#e8e8e8;font-weight:700;text-shadow:0 0 1px #000">Component To Local</div>
<div class="a" style="left:899.3px;top:366.9px;width:16px;height:16px;border-radius:50%;background:radial-gradient(rgba(70,130,200,0.28),transparent 70%)"></div><svg class="a" style="left:903.3px;top:369.9px" width="8" height="10" viewBox="0 0 8 10"><circle cx="4" cy="1.6" r="1.3" fill="#d8ecff"/><path d="M0.8 3.6 H7.2 M4 3.4 V6.8 M4 6.8 L3 9.6 M4 6.8 L5 9.6" stroke="#d8ecff" stroke-width="1.1" fill="none"/></svg>
<div class="a" style="left:967.5999999999999px;top:366.9px;width:16px;height:16px;border-radius:50%;background:radial-gradient(rgba(70,130,200,0.28),transparent 70%)"></div><svg class="a" style="left:971.5999999999999px;top:369.9px" width="8" height="10" viewBox="0 0 8 10"><circle cx="4" cy="1.6" r="1.3" fill="#f0f0f0"/><path d="M0.8 3.6 H7.2 M4 3.4 V6.8 M4 6.8 L3 9.6 M4 6.8 L5 9.6" stroke="#f0f0f0" stroke-width="1.1" fill="none"/></svg>
<div class="a node" style="left:1001.5px;top:322px;width:104.5px;height:91px"><div class="nh" style="height:20px;background:linear-gradient(100deg,#8e8070 0%,#6a5e52 50%,#2e2a26 100%)"></div></div>
<div class="t" style="left:1007.7px;top:324.1px;font-size:6.2px;color:#e8e0d8;font-weight:700;text-shadow:0 0 1px #000">Output Pose</div>
<div class="t" style="left:1007.7px;top:334.6px;font-size:5px;color:#c0a890;font-weight:400;font-style:italic;opacity:0.7">AnimGraph</div>
<div class="a" style="left:1003.5px;top:367px;width:16px;height:16px;border-radius:50%;background:radial-gradient(rgba(70,130,200,0.28),transparent 70%)"></div><svg class="a" style="left:1007.5px;top:370px" width="8" height="10" viewBox="0 0 8 10"><circle cx="4" cy="1.6" r="1.3" fill="#f0f0f0"/><path d="M0.8 3.6 H7.2 M4 3.4 V6.8 M4 6.8 L3 9.6 M4 6.8 L5 9.6" stroke="#f0f0f0" stroke-width="1.1" fill="none"/></svg>
<div class="t" style="left:1018px;top:372.3px;font-size:5.8px;color:#e8e8e8;font-weight:400;">Result</div>
<svg class="a" style="left:1045px;top:341px" width="62" height="66" viewBox="0 0 62 66">
 <defs><linearGradient id="mq" x1="0" y1="0" x2="1" y2="1"><stop offset="0" stop-color="#f0f0f0"/><stop offset="1" stop-color="#a0a0a0"/></linearGradient></defs>
 <g stroke="url(#mq)" stroke-linecap="round" stroke-linejoin="round" fill="none">
  <path d="M31 13 L29 33" stroke-width="6.5"/>
  <path d="M28 15 L16 21 L11 26" stroke-width="3.2"/>
  <path d="M33 16 L41 24 L54 19" stroke-width="3.2"/>
  <path d="M30 33 L43 35 L44 50" stroke-width="4"/>
  <path d="M28 34 L22 47 L12 59" stroke-width="3.6"/>
 </g>
 <ellipse cx="35" cy="6.5" rx="4.5" ry="5.5" fill="#e4e4e4"/>
 <path d="M8 23 l-2 3 l4 2 l2-3 z" fill="#d8d8d8"/>
 <path d="M53 16 l4 1 l-1 4 l-4 -1 z" fill="#d8d8d8"/>
 <path d="M42 49 l10 0 l1 3 l-11 1 z" fill="#b8b8b8"/>
</svg>
<div class="t" style="left:879px;top:785px;font-size:67.5px;font-weight:700;color:rgba(98,98,98,0.78);letter-spacing:0.5px;transform:scaleX(0.78);transform-origin:0 0">ANIMATION</div>
<!--/NODES-->
 <div class="a" style="left:0;top:0;width:1186px;height:37px;background:rgba(14,14,14,0.82)"></div>
 <div class="a" style="left:46px;top:1px;width:1px;height:36px;background:rgba(40,40,40,0.6)"></div>
 <div class="a" style="left:127px;top:1px;width:1px;height:36px;background:rgba(40,40,40,0.6)"></div>
 <svg class="a" style="left:8px;top:12px" width="14" height="16" viewBox="0 0 14 16"><path d="M1 1 H5 V15 L3 13 L1 15 Z" fill="#6a6a6a"/><path d="M4 3 H10 V15 L7 12 L4 15 Z" fill="#b8b8b8"/></svg>
 <svg class="a" style="left:26px;top:16px" width="10" height="7" viewBox="0 0 10 7"><path d="M1 1.5 L5 5.5 L9 1.5" stroke="#b8b8b8" stroke-width="1.3" fill="none"/></svg>
 <svg class="a" style="left:56px;top:10px" width="21" height="17" viewBox="0 0 21 17"><path d="M1 8.5 L9 1 V5.5 H20 V11.5 H9 V16 Z" fill="#f0f0f0"/></svg>
 <svg class="a" style="left:95px;top:10px" width="21" height="17" viewBox="0 0 21 17"><path d="M20 8.5 L12 1 V5.5 H1 V11.5 H12 V16 Z" fill="#8a8a8a"/></svg>
 <svg class="a" style="left:138px;top:8px" width="25" height="24" viewBox="0 0 25 24"><circle cx="17.5" cy="3.5" r="3" fill="#b8b8b8"/><path d="M8 9 L13 7 L17 10 L14.5 15 L18 21 M14.5 15 L9.5 18.5 L3 18.5 M16 10 L22 12" stroke="#b8b8b8" stroke-width="2.4" fill="none"/></svg>
 <div class="t" style="left:176px;top:10px;font-size:18.6px;color:#9c9c9c">SK_LAVIFV_Skeleton1_AnimBlueprint</div>
 <svg class="a" style="left:502px;top:9px" width="10" height="17" viewBox="0 0 10 17"><path d="M2 1.5 L8.5 8.5 L2 15.5" stroke="#b0b0b0" stroke-width="1.6" fill="none"/></svg>
 <div class="t" style="left:522px;top:10px;font-size:18.6px;color:#b0b0b0">AnimGraph</div>
 <div class="t" style="left:1111px;top:8px;font-size:19px;font-weight:700;color:#3a3a3a">Zoom -4</div>
</div>
<div id="details" class="a" style="background:#151515">
 <div class="a" style="left:0;top:0;width:101px;height:25px;background:#242424;border-radius:3px 3px 0 0"></div>
 <div class="a" style="left:0;top:24px;width:208px;height:588px;background:#242424"></div>
 <svg class="a" style="left:5px;top:6px" width="18" height="16" viewBox="0 0 18 16"><path d="M1 1.5 H6 M1 4 H5 M10 10 H16 M9 12.5 H16 M6 15 H16" stroke="#7a7a7a" stroke-width="0.8"/><path d="M13.5 1 L16 3.5 L6 13 L1.5 15 L3.5 10.5 Z" fill="#c8c8c8"/></svg>
 <div class="t" style="left:27.5px;top:6px;font-size:12.5px;color:#d0d0d0">Details</div>
 <svg class="a" style="left:79px;top:8px" width="8" height="8" viewBox="0 0 8 8"><path d="M1 1 L7 7 M7 1 L1 7" stroke="#c8c8c8" stroke-width="1.5"/></svg>
 <svg class="a" style="left:108px;top:6px" width="18" height="16" viewBox="0 0 18 16"><path d="M1 1.5 H6 M1 4 H5 M10 10 H16 M9 12.5 H16 M6 15 H16" stroke="#7a7a7a" stroke-width="0.8"/><path d="M13.5 1 L16 3.5 L6 13 L1.5 15 L3.5 10.5 Z" fill="#c8c8c8"/></svg>
 <div class="t" style="left:130.5px;top:6px;font-size:12.5px;color:#d0d0d0">Previe...</div>
</div>
<div id="animprev" class="a" style="background:#151515">
 <div class="a" style="left:0;top:2px;width:100px;height:24px;background:#242424;border-radius:3px 3px 0 0"></div>
 <div class="a" style="left:0;top:25px;width:208px;height:250px;background:#242424"></div>
 <div class="t" style="left:27.5px;top:8px;font-size:12.5px;color:#c8c8c8">Anim...</div>
 <svg class="a" style="left:79px;top:9px" width="8" height="8" viewBox="0 0 8 8"><path d="M1 1 L7 7 M7 1 L1 7" stroke="#c8c8c8" stroke-width="1.5"/></svg>
 <svg class="a" style="left:106px;top:6px" width="18" height="17" viewBox="0 0 18 17"><path d="M1 3 h5 l2 2 h6 v10 h-13 z" fill="#b8b8b8"/><circle cx="12" cy="11" r="4" fill="#151515" stroke="#c8c8c8" stroke-width="1.4"/><path d="M9 14 L6 16.5" stroke="#c8c8c8" stroke-width="1.5"/></svg>
 <div class="t" style="left:130px;top:8px;font-size:12.5px;color:#c8c8c8">Asset...</div>
 <div class="a" style="left:5px;top:31px;width:14px;height:14px;border-radius:50%;border:1.5px solid #2a7ad0;background:#1a2a3a"></div>
 <div class="a" style="left:9.5px;top:35.5px;width:5px;height:5px;border-radius:50%;background:#3a8ae0"></div>
 <div class="t" style="left:25px;top:32px;font-size:12.5px;color:#e8e8e8">Edit Preview</div>
 <div class="a" style="left:104.5px;top:31px;width:14px;height:14px;border-radius:50%;border:1.5px solid #1e1e1e;background:#242424"></div>
 <div class="t" style="left:124px;top:32px;font-size:12.5px;color:#e8e8e8">Edit Defaults</div>
 <div class="a" style="left:11px;top:60px;width:137px;height:21px;background:#0f0f0f;border-radius:10px"></div>
 <svg class="a" style="left:16px;top:63px" width="15" height="15" viewBox="0 0 15 15"><circle cx="6" cy="6" r="4.8" fill="none" stroke="#d0d0d0" stroke-width="1.4"/><path d="M9.5 9.5 L13.5 13.5" stroke="#d0d0d0" stroke-width="1.6"/></svg>
 <div class="t" style="left:39px;top:64px;font-size:12.5px;color:#555">Search</div>
 <svg class="a" style="left:161px;top:63px" width="15" height="14" viewBox="0 0 15 14"><rect x="1" y="1" width="13" height="12" fill="none" stroke="#d0d0d0" stroke-width="1.3"/><path d="M1 4.5 H14 M1 8 H14 M5.5 4.5 V13" stroke="#d0d0d0" stroke-width="1.1"/></svg>
 <svg class="a" style="left:185px;top:62px" width="16" height="16" viewBox="0 0 16 16"><g fill="#c8c8c8"><circle cx="8" cy="8" r="5"/><rect x="7" y="0.5" width="2" height="15"/><rect x="0.5" y="7" width="15" height="2"/><rect x="7" y="0.5" width="2" height="15" transform="rotate(45 8 8)"/><rect x="7" y="0.5" width="2" height="15" transform="rotate(-45 8 8)"/></g><circle cx="8" cy="8" r="3" fill="#242424"/><circle cx="8" cy="8" r="1.8" fill="#6a6a6a"/></svg>
 <div class="a" style="left:3px;top:88px;width:202px;height:187px;background:#1c1c1c"></div>
<div class="a" style="left:3px;top:90px;width:186px;height:26px;background:#2c2c2c"></div><svg class="a" style="left:9px;top:100.0px" width="10" height="7" viewBox="0 0 10 7"><path d="M0.5 0.5 H9.5 L5 6 Z" fill="#5a5a5a"/></svg><div class="t" style="left:25px;top:97.5px;font-size:10.5px;font-weight:700;color:#d0d0d0">Default</div><div class="a" style="left:3px;top:116px;width:186px;height:27px;background:#232323;border-top:1px solid #1a1a1a"></div><div class="a" style="left:77.5px;top:116px;width:1px;height:27px;background:#1a1a1a"></div><div class="a" style="left:167px;top:116px;width:1px;height:27px;background:#1c1c1c"></div><div class="a" style="left:91px;top:121px;width:73px;height:18px;background:#0d0d0d;border-radius:3px"></div><div class="t" style="left:25px;top:125px;font-size:11px;color:#a8a8a8">Turret Y...</div><div class="t" style="left:99px;top:125px;font-size:11px;color:#e0e0e0">0.0</div><div class="a" style="left:3px;top:143px;width:186px;height:27.5px;background:#232323;border-top:1px solid #1a1a1a"></div><div class="a" style="left:77.5px;top:143px;width:1px;height:27.5px;background:#1a1a1a"></div><div class="a" style="left:167px;top:143px;width:1px;height:27.5px;background:#1c1c1c"></div><div class="a" style="left:91px;top:148px;width:73px;height:18px;background:#0d0d0d;border-radius:3px"></div><div class="t" style="left:25px;top:152px;font-size:11px;color:#a8a8a8">Gun Pitch</div><div class="t" style="left:99px;top:152px;font-size:11px;color:#e0e0e0">0.0</div><div class="a" style="left:3px;top:170.5px;width:186px;height:27.5px;background:#232323;border-top:1px solid #1a1a1a"></div><div class="a" style="left:77.5px;top:170.5px;width:1px;height:27.5px;background:#1a1a1a"></div><div class="a" style="left:167px;top:170.5px;width:1px;height:27.5px;background:#1c1c1c"></div><div class="a" style="left:91px;top:175.5px;width:73px;height:18px;background:#0d0d0d;border-radius:3px"></div><div class="t" style="left:25px;top:179.5px;font-size:11px;color:#a8a8a8">Door Val...</div><div class="t" style="left:99px;top:179.5px;font-size:11px;color:#e0e0e0">0.0</div><div class="a" style="left:3px;top:198px;width:186px;height:25.5px;background:#2c2c2c"></div><svg class="a" style="left:9px;top:207.75px" width="10" height="7" viewBox="0 0 10 7"><path d="M0.5 0.5 H9.5 L5 6 Z" fill="#5a5a5a"/></svg><div class="t" style="left:25px;top:205.25px;font-size:10.5px;font-weight:700;color:#d0d0d0">Root Motion</div><div class="a" style="left:3px;top:223.5px;width:186px;height:27.5px;background:#232323;border-top:1px solid #1a1a1a"></div><div class="a" style="left:77.5px;top:223.5px;width:1px;height:27.5px;background:#1a1a1a"></div><div class="a" style="left:167px;top:223.5px;width:1px;height:27.5px;background:#1c1c1c"></div><div class="a" style="left:91px;top:228.5px;width:73px;height:18px;background:#0d0d0d;border-radius:3px"></div><div class="t" style="left:25px;top:232.5px;font-size:11px;color:#a8a8a8">Root Mo...</div><div class="t" style="left:99px;top:232.5px;font-size:11px;color:#e0e0e0">Root Mo</div><div class="a" style="left:137px;top:230.5px;width:10px;height:14px;background:#0d0d0d"></div><svg class="a" style="left:143px;top:234.5px" width="10" height="7" viewBox="0 0 10 7"><path d="M1 1.5 L5 5.5 L9 1.5" stroke="#e0e0e0" stroke-width="1.4" fill="none"/></svg><div class="a" style="left:3px;top:251px;width:186px;height:24px;background:#2c2c2c"></div><svg class="a" style="left:9px;top:260.0px" width="10" height="7" viewBox="0 0 10 7"><path d="M0.5 0.5 H9.5 L5 6 Z" fill="#5a5a5a"/></svg><div class="t" style="left:25px;top:257.5px;font-size:10.5px;font-weight:700;color:#d0d0d0">Notifies</div> <div class="a" style="left:191px;top:90px;width:12px;height:183px;background:#1a1a1a"></div>
 <div class="a" style="left:192.5px;top:92px;width:8px;height:125px;border-radius:4px;background:#565656"></div>
</div>
<div id="status" class="a">
 <svg class="a" style="left:9px;top:8px" width="18" height="17" viewBox="0 0 18 17"><path d="M1 3 h5 l2 2 h6 v10 h-13 z" fill="#b8b8b8"/><circle cx="12" cy="11" r="4" fill="#242424" stroke="#c8c8c8" stroke-width="1.4"/><path d="M9 14 L6 16.5" stroke="#c8c8c8" stroke-width="1.5"/></svg>
 <div class="t" style="left:31px;top:11px;font-size:12.7px;color:#c8c8c8">Content Drawer</div>
 <div class="a" style="left:131px;top:0;width:1px;height:32px;background:#1a1a1a"></div>
 <svg class="a" style="left:144px;top:7px" width="14" height="18" viewBox="0 0 14 18"><rect x="1" y="2" width="12" height="15" fill="#c8c8c8"/><rect x="3" y="0.5" width="1.5" height="3" fill="#c8c8c8"/><rect x="6.3" y="0.5" width="1.5" height="3" fill="#c8c8c8"/><rect x="9.5" y="0.5" width="1.5" height="3" fill="#c8c8c8"/><path d="M3 8 L6 10 L3 12 M7 13 H11" stroke="#242424" stroke-width="1.3" fill="none"/></svg>
 <div class="t" style="left:163px;top:11px;font-size:12.7px;color:#c8c8c8">Output Log</div>
 <div class="a" style="left:236px;top:0;width:1px;height:32px;background:#1a1a1a"></div>
 <svg class="a" style="left:250px;top:9px" width="18" height="15" viewBox="0 0 18 15"><rect x="1" y="1" width="16" height="13" fill="none" stroke="#c8c8c8" stroke-width="1.3"/><path d="M4 5 L7 7.5 L4 10 M8 11 H13" stroke="#c8c8c8" stroke-width="1.2" fill="none"/></svg>
 <div class="t" style="left:271px;top:11px;font-size:12.7px;color:#c8c8c8">Cmd</div>
 <svg class="a" style="left:303px;top:13px" width="11" height="7" viewBox="0 0 11 7"><path d="M1 1 L5.5 5.5 L10 1" stroke="#c8c8c8" stroke-width="1.4" fill="none"/></svg>
 <div class="a" style="left:327px;top:5px;width:268px;height:22px;background:#0f0f0f;border:1px solid #3a3a3a;border-radius:3px"></div>
 <div class="t" style="left:336px;top:9px;font-family:'Liberation Mono',monospace;font-size:12px;color:#4a4a4a">Enter Console Command</div>
 <div class="a" style="left:604px;top:0;width:1px;height:32px;background:#1a1a1a"></div>
 <div class="a" style="left:1683px;top:0;width:1px;height:32px;background:#1a1a1a"></div>
 <svg class="a" style="left:1697px;top:8px" width="17" height="17" viewBox="0 0 17 17"><path d="M1 1 H11 L14 4 V9 H9 V15 H1 Z" fill="#b8b8b8"/><rect x="4" y="1" width="6" height="4" fill="#7a7a7a"/><path d="M9 12 L11.5 14.5 L16 9.5" stroke="#d0d0d0" stroke-width="1.6" fill="none"/></svg>
 <div class="t" style="left:1718px;top:11px;font-size:12.7px;color:#c8c8c8">All Saved</div>
 <div class="a" style="left:1780px;top:4px;width:1px;height:24px;background:#1a1a1a"></div>
 <svg class="a" style="left:1787px;top:7px" width="16" height="18" viewBox="0 0 16 18"><circle cx="3" cy="3" r="2.2" fill="#d8d8d8"/><circle cx="13" cy="3" r="2.2" fill="#d8d8d8"/><circle cx="3" cy="15" r="2.2" fill="#d8d8d8"/><path d="M3 3 V15 M13 3 Q13 9 3 10" stroke="#d8d8d8" stroke-width="1.3" fill="none"/></svg>
 <div class="t" style="left:1809px;top:11px;font-size:12.7px;color:#c8c8c8">Revision Control</div>
</div>
<div id="taskbar" class="a">
 <div class="a" style="left:0;top:0;width:1920px;height:1px;background:#3a3f5a"></div>
 <svg class="a" style="left:750px;top:11px" width="24" height="24" viewBox="0 0 24 24"><rect x="0.5" y="0.5" width="11" height="11" fill="#3fb0f0"/><rect x="12.5" y="0.5" width="11" height="11" fill="#3fb0f0"/><rect x="0.5" y="12.5" width="11" height="11" fill="#3fb0f0"/><rect x="12.5" y="12.5" width="11" height="11" fill="#3fb0f0"/></svg>
 <svg class="a" style="left:794px;top:11px" width="24" height="24" viewBox="0 0 24 24"><rect x="0" y="0" width="24" height="24" rx="3" fill="#1f78c8"/><rect x="3" y="3" width="8" height="15" rx="1" fill="#e8f4ff"/><rect x="13" y="3" width="8" height="10" rx="1" fill="#e8f4ff"/></svg>
 <svg class="a" style="left:838px;top:10px" width="26" height="26" viewBox="0 0 26 26"><circle cx="13" cy="13" r="12" fill="#e94234"/><path d="M13 13 L2.6 7 A12 12 0 0 0 13 25 Z" fill="#34a853"/><path d="M13 13 L13 25 A12 12 0 0 0 23.4 7 Z" fill="#fbbc05"/><circle cx="13" cy="13" r="5.5" fill="#fff"/><circle cx="13" cy="13" r="4.3" fill="#4285f4"/></svg>
 <svg class="a" style="left:882px;top:10px" width="30" height="28" viewBox="0 0 30 28"><circle cx="13" cy="15" r="12" fill="#5865f2"/><path d="M7 11 q6-3 12 0 l1 7 q-2 2-4 2 l-1-1.5 h-4 l-1 1.5 q-2 0-4-2 z" fill="#fff"/><circle cx="10.5" cy="15" r="1.4" fill="#5865f2"/><circle cx="15.5" cy="15" r="1.4" fill="#5865f2"/><circle cx="22" cy="6" r="5.5" fill="#e84a3c"/><text x="19.8" y="9" font-family="Liberation Sans" font-size="8" fill="#fff">8</text></svg>
 <svg class="a" style="left:926px;top:12px" width="26" height="22" viewBox="0 0 26 22"><path d="M1 2 h8 l2 2 h14 v17 h-24 z" fill="#f0b428"/><rect x="1" y="7" width="24" height="14" fill="#ffd050"/><rect x="7" y="13" width="12" height="8" fill="#2a78c8"/></svg>
 <svg class="a" style="left:970px;top:10px" width="26" height="26" viewBox="0 0 26 26"><circle cx="13" cy="13" r="12" fill="#1fa0d8"/><path d="M3 15 q2-12 14-11 q8 2 7 10 q-1 5-8 4 q-5-1-3-5 q-7-1-10 2z" fill="#3cd070"/><path d="M4 18 q4 7 12 6 q-8-3-6-10 q-4 1-6 4z" fill="#0a5aa8"/></svg>
 <div class="a" style="left:1004px;top:5px;width:42px;height:40px;background:#2c3048;border-radius:4px"></div>
 <svg class="a" style="left:1013px;top:10px" width="26" height="26" viewBox="0 0 26 26"><circle cx="13" cy="13" r="12" fill="#0a0a0a" stroke="#e8e8e8" stroke-width="1.3"/><path d="M8 8 q2-2 3 0 v8 q0 2 2 2 q2 0 2-2 v-7 q1-2 3-2 q-1 1-1 3 v7 q0 4-4 4 q-4 0-5-3 v-9 z" fill="#f0f0f0"/></svg>
 <div class="a" style="left:1018px;top:42px;width:16px;height:3px;border-radius:2px;background:#e060c0"></div>
 <svg class="a" style="left:1058px;top:10px" width="26" height="26" viewBox="0 0 26 26"><path d="M13 1 A12 12 0 1 1 5 22 L1.5 25 L3 19.5 A12 12 0 0 1 13 1 Z" fill="#25c93a"/><path d="M9 7 q-2 2 0 6 q3 5 8 6 q2 0 3-2 l-3-2 l-1.5 1.5 q-3-1-4.5-4.5 l1.5-1.5 l-2-3 z" fill="#fff"/></svg>
 <svg class="a" style="left:1102px;top:10px" width="26" height="26" viewBox="0 0 26 26"><rect x="9" y="2" width="16" height="18" rx="2" fill="#1a6cc8"/><rect x="1" y="6" width="13" height="13" rx="1.5" fill="#0c58b0"/><text x="3.5" y="16.5" font-family="Liberation Sans" font-weight="700" font-size="10" fill="#fff">O</text><rect x="11" y="17" width="14" height="8" fill="#1a6cc8"/><text x="12" y="24" font-family="Liberation Sans" font-weight="700" font-size="6" fill="#fff">PRE</text></svg>
 <svg class="a" style="left:1146px;top:10px" width="26" height="26" viewBox="0 0 26 26"><rect x="0" y="0" width="26" height="26" fill="#c8ecea"/><path d="M3 22 V4 H7 L13 13 L19 4 H23 V22 H19 V11 L13 19 L7 11 V22 Z" fill="#13a8a0"/></svg>
 <div class="a" style="left:803px;top:42px;width:6px;height:2px;border-radius:1px;background:#8a8ea0"></div>
 <div class="a" style="left:848px;top:42px;width:6px;height:2px;border-radius:1px;background:#8a8ea0"></div>
 <div class="a" style="left:892px;top:42px;width:6px;height:2px;border-radius:1px;background:#8a8ea0"></div>
 <div class="a" style="left:936px;top:42px;width:6px;height:2px;border-radius:1px;background:#8a8ea0"></div>
 <div class="a" style="left:980px;top:42px;width:6px;height:2px;border-radius:1px;background:#8a8ea0"></div>
 <div class="a" style="left:1068px;top:42px;width:6px;height:2px;border-radius:1px;background:#8a8ea0"></div>
 <div class="a" style="left:1112px;top:42px;width:6px;height:2px;border-radius:1px;background:#8a8ea0"></div>
 <div class="a" style="left:1156px;top:42px;width:6px;height:2px;border-radius:1px;background:#8a8ea0"></div>
 <svg class="a" style="left:1672px;top:18px" width="14" height="9" viewBox="0 0 14 9"><path d="M1.5 7.5 L7 2 L12.5 7.5" stroke="#f0f0f0" stroke-width="1.5" fill="none"/></svg>
 <svg class="a" style="left:1702px;top:15px" width="18" height="16" viewBox="0 0 18 16"><path d="M1 5.5 H4 L8 2 V14 L4 10.5 H1 Z" fill="none" stroke="#f0f0f0" stroke-width="1.2"/><path d="M10.5 5 q2 3 0 6 M13 3 q3.5 5 0 10" stroke="#f0f0f0" stroke-width="1.2" fill="none"/></svg>
 <svg class="a" style="left:1736px;top:14px" width="14" height="20" viewBox="0 0 14 20"><rect x="4" y="1" width="6" height="11" rx="3" fill="none" stroke="#e070d0" stroke-width="1.5"/><path d="M1.5 9 q0 6 5.5 6 q5.5 0 5.5-6 M7 15 V19" stroke="#e070d0" stroke-width="1.5" fill="none"/></svg>
 <svg class="a" style="left:1765px;top:15px" width="19" height="16" viewBox="0 0 19 16"><path d="M1 6 q8.5-8 17 0 M3.5 9 q6-5.5 12 0 M6 12 q3.5-3 7 0" stroke="#f0f0f0" stroke-width="1.5" fill="none"/><circle cx="9.5" cy="14" r="1.3" fill="#f0f0f0"/></svg>
 <svg class="a" style="left:1790px;top:15px" width="18" height="16" viewBox="0 0 18 16"><path d="M1 5.5 H4 L8 2 V14 L4 10.5 H1 Z" fill="none" stroke="#f0f0f0" stroke-width="1.2"/><path d="M10.5 5 q2 3 0 6 M13 3 q3.5 5 0 10" stroke="#f0f0f0" stroke-width="1.2" fill="none"/></svg>
 <div class="t" style="left:1823px;top:10px;font-size:11.5px;color:#f0f0f0">11:34 PM</div>
 <div class="t" style="left:1823px;top:26px;font-size:11.5px;color:#f0f0f0">8/1/2023</div>
 <div class="a" style="left:1884px;top:16px;width:16px;height:16px;border-radius:50%;background:#e040c0"></div>
 <div class="t" style="left:1889px;top:19px;font-size:9px;color:#2a1030">2</div>
</div>
</body></html>
